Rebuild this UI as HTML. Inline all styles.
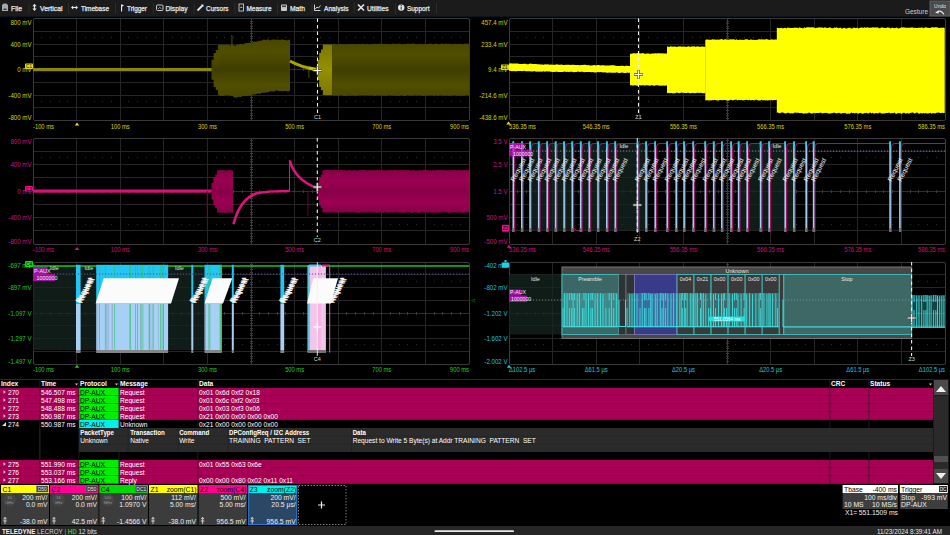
<!DOCTYPE html>
<html><head><meta charset="utf-8"><style>
html,body{margin:0;padding:0;background:#000;}
body{width:950px;height:535px;overflow:hidden;position:relative;}
svg{position:absolute;left:0;top:0;}
text{font-family:"Liberation Sans",sans-serif;}
</style></head><body>
<svg width="950" height="535" viewBox="0 0 950 535"><defs><linearGradient id="gY" x1="0" y1="0" x2="0" y2="1"><stop offset="0" stop-color="#4a4800"/><stop offset="0.22" stop-color="#504e00"/><stop offset="0.5" stop-color="#403e00"/><stop offset="0.78" stop-color="#504e00"/><stop offset="1" stop-color="#4a4800"/></linearGradient><linearGradient id="gYb" x1="0" y1="0" x2="0" y2="1"><stop offset="0" stop-color="#7c7800"/><stop offset="0.5" stop-color="#959000"/><stop offset="1" stop-color="#7c7800"/></linearGradient><linearGradient id="gM" x1="0" y1="0" x2="0" y2="1"><stop offset="0" stop-color="#850046"/><stop offset="0.25" stop-color="#9c0052"/><stop offset="0.5" stop-color="#880047"/><stop offset="0.75" stop-color="#9c0052"/><stop offset="1" stop-color="#850046"/></linearGradient><clipPath id="c1"><rect x="0" y="17" width="950" height="362"/></clipPath></defs>
<rect x="0" y="0" width="950" height="16" fill="#1b1b1b" />
<rect x="0" y="16" width="950" height="1" fill="#0c1420" />
<rect x="28.5" y="3" width="1" height="11" fill="#2c2c2c" />
<rect x="68" y="3" width="1" height="11" fill="#2c2c2c" />
<rect x="115" y="3" width="1" height="11" fill="#2c2c2c" />
<rect x="152.7" y="3" width="1" height="11" fill="#2c2c2c" />
<rect x="193.6" y="3" width="1" height="11" fill="#2c2c2c" />
<rect x="234.5" y="3" width="1" height="11" fill="#2c2c2c" />
<rect x="277" y="3" width="1" height="11" fill="#2c2c2c" />
<rect x="311.5" y="3" width="1" height="11" fill="#2c2c2c" />
<rect x="353.8" y="3" width="1" height="11" fill="#2c2c2c" />
<rect x="395" y="3" width="1" height="11" fill="#2c2c2c" />
<rect x="436" y="3" width="1" height="11" fill="#2c2c2c" />
<text x="11" y="10.5" font-size="7.4" fill="#ececec" text-anchor="start" textLength="11.00" lengthAdjust="spacingAndGlyphs"  stroke="#ececec" stroke-width="0.25">File</text>
<text x="40" y="10.5" font-size="7.4" fill="#ececec" text-anchor="start" textLength="22.50" lengthAdjust="spacingAndGlyphs"  stroke="#ececec" stroke-width="0.25">Vertical</text>
<text x="81" y="10.5" font-size="7.4" fill="#ececec" text-anchor="start" textLength="28.00" lengthAdjust="spacingAndGlyphs"  stroke="#ececec" stroke-width="0.25">Timebase</text>
<text x="127" y="10.5" font-size="7.4" fill="#ececec" text-anchor="start" textLength="20.00" lengthAdjust="spacingAndGlyphs"  stroke="#ececec" stroke-width="0.25">Trigger</text>
<text x="165.5" y="10.5" font-size="7.4" fill="#ececec" text-anchor="start" textLength="22.00" lengthAdjust="spacingAndGlyphs"  stroke="#ececec" stroke-width="0.25">Display</text>
<text x="206" y="10.5" font-size="7.4" fill="#ececec" text-anchor="start" textLength="22.50" lengthAdjust="spacingAndGlyphs"  stroke="#ececec" stroke-width="0.25">Cursors</text>
<text x="246.5" y="10.5" font-size="7.4" fill="#ececec" text-anchor="start" textLength="25.00" lengthAdjust="spacingAndGlyphs"  stroke="#ececec" stroke-width="0.25">Measure</text>
<text x="290" y="10.5" font-size="7.4" fill="#ececec" text-anchor="start" textLength="15.00" lengthAdjust="spacingAndGlyphs"  stroke="#ececec" stroke-width="0.25">Math</text>
<text x="324" y="10.5" font-size="7.4" fill="#ececec" text-anchor="start" textLength="24.50" lengthAdjust="spacingAndGlyphs"  stroke="#ececec" stroke-width="0.25">Analysis</text>
<text x="367" y="10.5" font-size="7.4" fill="#ececec" text-anchor="start" textLength="21.50" lengthAdjust="spacingAndGlyphs"  stroke="#ececec" stroke-width="0.25">Utilities</text>
<text x="407" y="10.5" font-size="7.4" fill="#ececec" text-anchor="start" textLength="22.50" lengthAdjust="spacingAndGlyphs"  stroke="#ececec" stroke-width="0.25">Support</text>
<path d="M2 5 L3.8 3.5 L6.2 3.5 L8 5 L8 11 L2 11 Z" fill="#a8a8a8"/><rect x="3.5" y="8.6" width="3" height="1.4" fill="#333"/>
<path d="M34.5 3.8 L36.6 6.2 L35.1 6.2 L35.1 8.6 L36.6 8.6 L34.5 11 L32.4 8.6 L33.9 8.6 L33.9 6.2 L32.4 6.2 Z" fill="#e8e8e8"/>
<path d="M71 7.5 L73.2 5.6 L73.2 7 L75.8 7 L75.8 5.6 L78 7.5 L75.8 9.4 L75.8 8 L73.2 8 L73.2 9.4 Z" fill="#e8e8e8"/>
<rect x="121" y="4.5" width="1.1" height="7" fill="#e8e8e8"/><path d="M122 4.5 L124 5.3 L122 6.8 Z" fill="#e8e8e8"/>
<rect x="156.5" y="5" width="6.5" height="5.5" rx="1" fill="none" stroke="#c8c8c8" stroke-width="1"/><path d="M158 9 L159.5 7.5 L161.5 8.5" stroke="#c8c8c8" stroke-width="0.7" fill="none"/>
<path d="M197.5 10.5 L202.5 5.5" stroke="#e8e8e8" stroke-width="1.8"/><path d="M201 4.5 L203.5 4.5 L203.5 7 Z" fill="#e8e8e8"/>
<rect x="239" y="4" width="4.5" height="7" fill="none" stroke="#c8c8c8" stroke-width="0.9"/><rect x="240.3" y="6.8" width="2" height="1" fill="#c8c8c8"/>
<rect x="281" y="4.5" width="6" height="6.5" rx="0.8" fill="#c8c8c8"/><rect x="282" y="5.5" width="4" height="1.6" fill="#444"/>
<path d="M314.5 4.5 L314.5 10.5 L320.5 10.5 M315.3 9 L317 7 L318.5 8 L320.5 5.5" stroke="#e8e8e8" stroke-width="0.9" fill="none"/>
<path d="M358 4.5 L364 10.5 M364 4.5 L358 10.5" stroke="#e8e8e8" stroke-width="1.6"/>
<circle cx="401.2" cy="7.6" r="3.2" fill="#e8e8e8"/><rect x="400.7" y="6.6" width="1" height="3" fill="#222"/><rect x="400.7" y="5" width="1" height="1" fill="#222"/>
<text x="928" y="13.5" font-size="6.5" fill="#d0d0d0" text-anchor="end"   >Gesture</text>
<rect x="930" y="1" width="20" height="15" fill="#4a4a4a" stroke="#606060" stroke-width="1"/>
<text x="940" y="8" font-size="5" fill="#e0e0e0" text-anchor="middle"   >Undo</text>
<path d="M937 12 Q941 9.5 944 14.5" stroke="#e8e8e8" stroke-width="1.2" fill="none"/><path d="M935 12.8 L938.5 10.5 L938.8 13.6 Z" fill="#e8e8e8"/>
<line x1="76.5" y1="18.5" x2="76.5" y2="120.7" stroke="#262626" stroke-width="1" />
<line x1="120.5" y1="18.5" x2="120.5" y2="120.7" stroke="#262626" stroke-width="1" />
<line x1="163.5" y1="18.5" x2="163.5" y2="120.7" stroke="#262626" stroke-width="1" />
<line x1="207.5" y1="18.5" x2="207.5" y2="120.7" stroke="#262626" stroke-width="1" />
<line x1="251.5" y1="18.5" x2="251.5" y2="120.7" stroke="#3c3c3c" stroke-width="1" />
<line x1="294.5" y1="18.5" x2="294.5" y2="120.7" stroke="#262626" stroke-width="1" />
<line x1="338.5" y1="18.5" x2="338.5" y2="120.7" stroke="#262626" stroke-width="1" />
<line x1="381.5" y1="18.5" x2="381.5" y2="120.7" stroke="#262626" stroke-width="1" />
<line x1="425.5" y1="18.5" x2="425.5" y2="120.7" stroke="#262626" stroke-width="1" />
<line x1="33" y1="31.5" x2="469" y2="31.5" stroke="#262626" stroke-width="1" />
<line x1="33" y1="44.5" x2="469" y2="44.5" stroke="#262626" stroke-width="1" />
<line x1="33" y1="56.5" x2="469" y2="56.5" stroke="#262626" stroke-width="1" />
<line x1="33" y1="69.5" x2="469" y2="69.5" stroke="#2e2e2e" stroke-width="1" />
<line x1="33" y1="82.5" x2="469" y2="82.5" stroke="#262626" stroke-width="1" />
<line x1="33" y1="95.5" x2="469" y2="95.5" stroke="#262626" stroke-width="1" />
<line x1="33" y1="107.5" x2="469" y2="107.5" stroke="#262626" stroke-width="1" />
<rect x="41" y="68.0" width="1" height="3" fill="#3a3a3a" />
<rect x="50" y="68.0" width="1" height="3" fill="#3a3a3a" />
<rect x="59" y="68.0" width="1" height="3" fill="#3a3a3a" />
<rect x="67" y="68.0" width="1" height="3" fill="#3a3a3a" />
<rect x="76" y="68.0" width="1" height="3" fill="#3a3a3a" />
<rect x="85" y="68.0" width="1" height="3" fill="#3a3a3a" />
<rect x="94" y="68.0" width="1" height="3" fill="#3a3a3a" />
<rect x="102" y="68.0" width="1" height="3" fill="#3a3a3a" />
<rect x="111" y="68.0" width="1" height="3" fill="#3a3a3a" />
<rect x="120" y="68.0" width="1" height="3" fill="#3a3a3a" />
<rect x="128" y="68.0" width="1" height="3" fill="#3a3a3a" />
<rect x="137" y="68.0" width="1" height="3" fill="#3a3a3a" />
<rect x="146" y="68.0" width="1" height="3" fill="#3a3a3a" />
<rect x="155" y="68.0" width="1" height="3" fill="#3a3a3a" />
<rect x="163" y="68.0" width="1" height="3" fill="#3a3a3a" />
<rect x="172" y="68.0" width="1" height="3" fill="#3a3a3a" />
<rect x="181" y="68.0" width="1" height="3" fill="#3a3a3a" />
<rect x="189" y="68.0" width="1" height="3" fill="#3a3a3a" />
<rect x="198" y="68.0" width="1" height="3" fill="#3a3a3a" />
<rect x="207" y="68.0" width="1" height="3" fill="#3a3a3a" />
<rect x="216" y="68.0" width="1" height="3" fill="#3a3a3a" />
<rect x="224" y="68.0" width="1" height="3" fill="#3a3a3a" />
<rect x="233" y="68.0" width="1" height="3" fill="#3a3a3a" />
<rect x="242" y="68.0" width="1" height="3" fill="#3a3a3a" />
<rect x="251" y="68.0" width="1" height="3" fill="#3a3a3a" />
<rect x="259" y="68.0" width="1" height="3" fill="#3a3a3a" />
<rect x="268" y="68.0" width="1" height="3" fill="#3a3a3a" />
<rect x="277" y="68.0" width="1" height="3" fill="#3a3a3a" />
<rect x="285" y="68.0" width="1" height="3" fill="#3a3a3a" />
<rect x="294" y="68.0" width="1" height="3" fill="#3a3a3a" />
<rect x="303" y="68.0" width="1" height="3" fill="#3a3a3a" />
<rect x="312" y="68.0" width="1" height="3" fill="#3a3a3a" />
<rect x="320" y="68.0" width="1" height="3" fill="#3a3a3a" />
<rect x="329" y="68.0" width="1" height="3" fill="#3a3a3a" />
<rect x="338" y="68.0" width="1" height="3" fill="#3a3a3a" />
<rect x="346" y="68.0" width="1" height="3" fill="#3a3a3a" />
<rect x="355" y="68.0" width="1" height="3" fill="#3a3a3a" />
<rect x="364" y="68.0" width="1" height="3" fill="#3a3a3a" />
<rect x="373" y="68.0" width="1" height="3" fill="#3a3a3a" />
<rect x="381" y="68.0" width="1" height="3" fill="#3a3a3a" />
<rect x="390" y="68.0" width="1" height="3" fill="#3a3a3a" />
<rect x="399" y="68.0" width="1" height="3" fill="#3a3a3a" />
<rect x="407" y="68.0" width="1" height="3" fill="#3a3a3a" />
<rect x="416" y="68.0" width="1" height="3" fill="#3a3a3a" />
<rect x="425" y="68.0" width="1" height="3" fill="#3a3a3a" />
<rect x="434" y="68.0" width="1" height="3" fill="#3a3a3a" />
<rect x="442" y="68.0" width="1" height="3" fill="#3a3a3a" />
<rect x="451" y="68.0" width="1" height="3" fill="#3a3a3a" />
<rect x="460" y="68.0" width="1" height="3" fill="#3a3a3a" />
<rect x="250.0" y="21" width="3" height="1" fill="#3a3a3a" />
<rect x="250.0" y="23" width="3" height="1" fill="#3a3a3a" />
<rect x="250.0" y="26" width="3" height="1" fill="#3a3a3a" />
<rect x="250.0" y="28" width="3" height="1" fill="#3a3a3a" />
<rect x="250.0" y="31" width="3" height="1" fill="#3a3a3a" />
<rect x="250.0" y="33" width="3" height="1" fill="#3a3a3a" />
<rect x="250.0" y="36" width="3" height="1" fill="#3a3a3a" />
<rect x="250.0" y="38" width="3" height="1" fill="#3a3a3a" />
<rect x="250.0" y="41" width="3" height="1" fill="#3a3a3a" />
<rect x="250.0" y="44" width="3" height="1" fill="#3a3a3a" />
<rect x="250.0" y="46" width="3" height="1" fill="#3a3a3a" />
<rect x="250.0" y="49" width="3" height="1" fill="#3a3a3a" />
<rect x="250.0" y="51" width="3" height="1" fill="#3a3a3a" />
<rect x="250.0" y="54" width="3" height="1" fill="#3a3a3a" />
<rect x="250.0" y="56" width="3" height="1" fill="#3a3a3a" />
<rect x="250.0" y="59" width="3" height="1" fill="#3a3a3a" />
<rect x="250.0" y="61" width="3" height="1" fill="#3a3a3a" />
<rect x="250.0" y="64" width="3" height="1" fill="#3a3a3a" />
<rect x="250.0" y="67" width="3" height="1" fill="#3a3a3a" />
<rect x="250.0" y="69" width="3" height="1" fill="#3a3a3a" />
<rect x="250.0" y="72" width="3" height="1" fill="#3a3a3a" />
<rect x="250.0" y="74" width="3" height="1" fill="#3a3a3a" />
<rect x="250.0" y="77" width="3" height="1" fill="#3a3a3a" />
<rect x="250.0" y="79" width="3" height="1" fill="#3a3a3a" />
<rect x="250.0" y="82" width="3" height="1" fill="#3a3a3a" />
<rect x="250.0" y="84" width="3" height="1" fill="#3a3a3a" />
<rect x="250.0" y="87" width="3" height="1" fill="#3a3a3a" />
<rect x="250.0" y="90" width="3" height="1" fill="#3a3a3a" />
<rect x="250.0" y="92" width="3" height="1" fill="#3a3a3a" />
<rect x="250.0" y="95" width="3" height="1" fill="#3a3a3a" />
<rect x="250.0" y="97" width="3" height="1" fill="#3a3a3a" />
<rect x="250.0" y="100" width="3" height="1" fill="#3a3a3a" />
<rect x="250.0" y="102" width="3" height="1" fill="#3a3a3a" />
<rect x="250.0" y="105" width="3" height="1" fill="#3a3a3a" />
<rect x="250.0" y="107" width="3" height="1" fill="#3a3a3a" />
<rect x="250.0" y="110" width="3" height="1" fill="#3a3a3a" />
<rect x="250.0" y="113" width="3" height="1" fill="#3a3a3a" />
<rect x="250.0" y="115" width="3" height="1" fill="#3a3a3a" />
<rect x="250.0" y="118" width="3" height="1" fill="#3a3a3a" />
<rect x="41" y="37" width="1" height="1" fill="#303030" />
<rect x="50" y="37" width="1" height="1" fill="#303030" />
<rect x="59" y="37" width="1" height="1" fill="#303030" />
<rect x="67" y="37" width="1" height="1" fill="#303030" />
<rect x="85" y="37" width="1" height="1" fill="#303030" />
<rect x="94" y="37" width="1" height="1" fill="#303030" />
<rect x="102" y="37" width="1" height="1" fill="#303030" />
<rect x="111" y="37" width="1" height="1" fill="#303030" />
<rect x="128" y="37" width="1" height="1" fill="#303030" />
<rect x="137" y="37" width="1" height="1" fill="#303030" />
<rect x="146" y="37" width="1" height="1" fill="#303030" />
<rect x="155" y="37" width="1" height="1" fill="#303030" />
<rect x="172" y="37" width="1" height="1" fill="#303030" />
<rect x="181" y="37" width="1" height="1" fill="#303030" />
<rect x="189" y="37" width="1" height="1" fill="#303030" />
<rect x="198" y="37" width="1" height="1" fill="#303030" />
<rect x="216" y="37" width="1" height="1" fill="#303030" />
<rect x="224" y="37" width="1" height="1" fill="#303030" />
<rect x="233" y="37" width="1" height="1" fill="#303030" />
<rect x="242" y="37" width="1" height="1" fill="#303030" />
<rect x="259" y="37" width="1" height="1" fill="#303030" />
<rect x="268" y="37" width="1" height="1" fill="#303030" />
<rect x="277" y="37" width="1" height="1" fill="#303030" />
<rect x="285" y="37" width="1" height="1" fill="#303030" />
<rect x="303" y="37" width="1" height="1" fill="#303030" />
<rect x="312" y="37" width="1" height="1" fill="#303030" />
<rect x="320" y="37" width="1" height="1" fill="#303030" />
<rect x="329" y="37" width="1" height="1" fill="#303030" />
<rect x="346" y="37" width="1" height="1" fill="#303030" />
<rect x="355" y="37" width="1" height="1" fill="#303030" />
<rect x="364" y="37" width="1" height="1" fill="#303030" />
<rect x="373" y="37" width="1" height="1" fill="#303030" />
<rect x="390" y="37" width="1" height="1" fill="#303030" />
<rect x="399" y="37" width="1" height="1" fill="#303030" />
<rect x="407" y="37" width="1" height="1" fill="#303030" />
<rect x="416" y="37" width="1" height="1" fill="#303030" />
<rect x="434" y="37" width="1" height="1" fill="#303030" />
<rect x="442" y="37" width="1" height="1" fill="#303030" />
<rect x="451" y="37" width="1" height="1" fill="#303030" />
<rect x="460" y="37" width="1" height="1" fill="#303030" />
<rect x="41" y="101" width="1" height="1" fill="#303030" />
<rect x="50" y="101" width="1" height="1" fill="#303030" />
<rect x="59" y="101" width="1" height="1" fill="#303030" />
<rect x="67" y="101" width="1" height="1" fill="#303030" />
<rect x="85" y="101" width="1" height="1" fill="#303030" />
<rect x="94" y="101" width="1" height="1" fill="#303030" />
<rect x="102" y="101" width="1" height="1" fill="#303030" />
<rect x="111" y="101" width="1" height="1" fill="#303030" />
<rect x="128" y="101" width="1" height="1" fill="#303030" />
<rect x="137" y="101" width="1" height="1" fill="#303030" />
<rect x="146" y="101" width="1" height="1" fill="#303030" />
<rect x="155" y="101" width="1" height="1" fill="#303030" />
<rect x="172" y="101" width="1" height="1" fill="#303030" />
<rect x="181" y="101" width="1" height="1" fill="#303030" />
<rect x="189" y="101" width="1" height="1" fill="#303030" />
<rect x="198" y="101" width="1" height="1" fill="#303030" />
<rect x="216" y="101" width="1" height="1" fill="#303030" />
<rect x="224" y="101" width="1" height="1" fill="#303030" />
<rect x="233" y="101" width="1" height="1" fill="#303030" />
<rect x="242" y="101" width="1" height="1" fill="#303030" />
<rect x="259" y="101" width="1" height="1" fill="#303030" />
<rect x="268" y="101" width="1" height="1" fill="#303030" />
<rect x="277" y="101" width="1" height="1" fill="#303030" />
<rect x="285" y="101" width="1" height="1" fill="#303030" />
<rect x="303" y="101" width="1" height="1" fill="#303030" />
<rect x="312" y="101" width="1" height="1" fill="#303030" />
<rect x="320" y="101" width="1" height="1" fill="#303030" />
<rect x="329" y="101" width="1" height="1" fill="#303030" />
<rect x="346" y="101" width="1" height="1" fill="#303030" />
<rect x="355" y="101" width="1" height="1" fill="#303030" />
<rect x="364" y="101" width="1" height="1" fill="#303030" />
<rect x="373" y="101" width="1" height="1" fill="#303030" />
<rect x="390" y="101" width="1" height="1" fill="#303030" />
<rect x="399" y="101" width="1" height="1" fill="#303030" />
<rect x="407" y="101" width="1" height="1" fill="#303030" />
<rect x="416" y="101" width="1" height="1" fill="#303030" />
<rect x="434" y="101" width="1" height="1" fill="#303030" />
<rect x="442" y="101" width="1" height="1" fill="#303030" />
<rect x="451" y="101" width="1" height="1" fill="#303030" />
<rect x="460" y="101" width="1" height="1" fill="#303030" />
<rect x="33.5" y="18.5" width="436.0" height="102.0" fill="none" stroke="#3a3a3a" stroke-width="1" rx="1.5"/>
<line x1="552.5" y1="18.5" x2="552.5" y2="120.7" stroke="#262626" stroke-width="1" />
<line x1="596.5" y1="18.5" x2="596.5" y2="120.7" stroke="#262626" stroke-width="1" />
<line x1="639.5" y1="18.5" x2="639.5" y2="120.7" stroke="#262626" stroke-width="1" />
<line x1="683.5" y1="18.5" x2="683.5" y2="120.7" stroke="#262626" stroke-width="1" />
<line x1="727.5" y1="18.5" x2="727.5" y2="120.7" stroke="#3c3c3c" stroke-width="1" />
<line x1="770.5" y1="18.5" x2="770.5" y2="120.7" stroke="#262626" stroke-width="1" />
<line x1="814.5" y1="18.5" x2="814.5" y2="120.7" stroke="#262626" stroke-width="1" />
<line x1="857.5" y1="18.5" x2="857.5" y2="120.7" stroke="#262626" stroke-width="1" />
<line x1="901.5" y1="18.5" x2="901.5" y2="120.7" stroke="#262626" stroke-width="1" />
<line x1="509" y1="31.5" x2="945" y2="31.5" stroke="#262626" stroke-width="1" />
<line x1="509" y1="44.5" x2="945" y2="44.5" stroke="#262626" stroke-width="1" />
<line x1="509" y1="56.5" x2="945" y2="56.5" stroke="#262626" stroke-width="1" />
<line x1="509" y1="69.5" x2="945" y2="69.5" stroke="#2e2e2e" stroke-width="1" />
<line x1="509" y1="82.5" x2="945" y2="82.5" stroke="#262626" stroke-width="1" />
<line x1="509" y1="95.5" x2="945" y2="95.5" stroke="#262626" stroke-width="1" />
<line x1="509" y1="107.5" x2="945" y2="107.5" stroke="#262626" stroke-width="1" />
<rect x="517" y="68.0" width="1" height="3" fill="#3a3a3a" />
<rect x="526" y="68.0" width="1" height="3" fill="#3a3a3a" />
<rect x="535" y="68.0" width="1" height="3" fill="#3a3a3a" />
<rect x="543" y="68.0" width="1" height="3" fill="#3a3a3a" />
<rect x="552" y="68.0" width="1" height="3" fill="#3a3a3a" />
<rect x="561" y="68.0" width="1" height="3" fill="#3a3a3a" />
<rect x="570" y="68.0" width="1" height="3" fill="#3a3a3a" />
<rect x="578" y="68.0" width="1" height="3" fill="#3a3a3a" />
<rect x="587" y="68.0" width="1" height="3" fill="#3a3a3a" />
<rect x="596" y="68.0" width="1" height="3" fill="#3a3a3a" />
<rect x="604" y="68.0" width="1" height="3" fill="#3a3a3a" />
<rect x="613" y="68.0" width="1" height="3" fill="#3a3a3a" />
<rect x="622" y="68.0" width="1" height="3" fill="#3a3a3a" />
<rect x="631" y="68.0" width="1" height="3" fill="#3a3a3a" />
<rect x="639" y="68.0" width="1" height="3" fill="#3a3a3a" />
<rect x="648" y="68.0" width="1" height="3" fill="#3a3a3a" />
<rect x="657" y="68.0" width="1" height="3" fill="#3a3a3a" />
<rect x="665" y="68.0" width="1" height="3" fill="#3a3a3a" />
<rect x="674" y="68.0" width="1" height="3" fill="#3a3a3a" />
<rect x="683" y="68.0" width="1" height="3" fill="#3a3a3a" />
<rect x="692" y="68.0" width="1" height="3" fill="#3a3a3a" />
<rect x="700" y="68.0" width="1" height="3" fill="#3a3a3a" />
<rect x="709" y="68.0" width="1" height="3" fill="#3a3a3a" />
<rect x="718" y="68.0" width="1" height="3" fill="#3a3a3a" />
<rect x="727" y="68.0" width="1" height="3" fill="#3a3a3a" />
<rect x="735" y="68.0" width="1" height="3" fill="#3a3a3a" />
<rect x="744" y="68.0" width="1" height="3" fill="#3a3a3a" />
<rect x="753" y="68.0" width="1" height="3" fill="#3a3a3a" />
<rect x="761" y="68.0" width="1" height="3" fill="#3a3a3a" />
<rect x="770" y="68.0" width="1" height="3" fill="#3a3a3a" />
<rect x="779" y="68.0" width="1" height="3" fill="#3a3a3a" />
<rect x="788" y="68.0" width="1" height="3" fill="#3a3a3a" />
<rect x="796" y="68.0" width="1" height="3" fill="#3a3a3a" />
<rect x="805" y="68.0" width="1" height="3" fill="#3a3a3a" />
<rect x="814" y="68.0" width="1" height="3" fill="#3a3a3a" />
<rect x="822" y="68.0" width="1" height="3" fill="#3a3a3a" />
<rect x="831" y="68.0" width="1" height="3" fill="#3a3a3a" />
<rect x="840" y="68.0" width="1" height="3" fill="#3a3a3a" />
<rect x="849" y="68.0" width="1" height="3" fill="#3a3a3a" />
<rect x="857" y="68.0" width="1" height="3" fill="#3a3a3a" />
<rect x="866" y="68.0" width="1" height="3" fill="#3a3a3a" />
<rect x="875" y="68.0" width="1" height="3" fill="#3a3a3a" />
<rect x="883" y="68.0" width="1" height="3" fill="#3a3a3a" />
<rect x="892" y="68.0" width="1" height="3" fill="#3a3a3a" />
<rect x="901" y="68.0" width="1" height="3" fill="#3a3a3a" />
<rect x="910" y="68.0" width="1" height="3" fill="#3a3a3a" />
<rect x="918" y="68.0" width="1" height="3" fill="#3a3a3a" />
<rect x="927" y="68.0" width="1" height="3" fill="#3a3a3a" />
<rect x="936" y="68.0" width="1" height="3" fill="#3a3a3a" />
<rect x="726.0" y="21" width="3" height="1" fill="#3a3a3a" />
<rect x="726.0" y="23" width="3" height="1" fill="#3a3a3a" />
<rect x="726.0" y="26" width="3" height="1" fill="#3a3a3a" />
<rect x="726.0" y="28" width="3" height="1" fill="#3a3a3a" />
<rect x="726.0" y="31" width="3" height="1" fill="#3a3a3a" />
<rect x="726.0" y="33" width="3" height="1" fill="#3a3a3a" />
<rect x="726.0" y="36" width="3" height="1" fill="#3a3a3a" />
<rect x="726.0" y="38" width="3" height="1" fill="#3a3a3a" />
<rect x="726.0" y="41" width="3" height="1" fill="#3a3a3a" />
<rect x="726.0" y="44" width="3" height="1" fill="#3a3a3a" />
<rect x="726.0" y="46" width="3" height="1" fill="#3a3a3a" />
<rect x="726.0" y="49" width="3" height="1" fill="#3a3a3a" />
<rect x="726.0" y="51" width="3" height="1" fill="#3a3a3a" />
<rect x="726.0" y="54" width="3" height="1" fill="#3a3a3a" />
<rect x="726.0" y="56" width="3" height="1" fill="#3a3a3a" />
<rect x="726.0" y="59" width="3" height="1" fill="#3a3a3a" />
<rect x="726.0" y="61" width="3" height="1" fill="#3a3a3a" />
<rect x="726.0" y="64" width="3" height="1" fill="#3a3a3a" />
<rect x="726.0" y="67" width="3" height="1" fill="#3a3a3a" />
<rect x="726.0" y="69" width="3" height="1" fill="#3a3a3a" />
<rect x="726.0" y="72" width="3" height="1" fill="#3a3a3a" />
<rect x="726.0" y="74" width="3" height="1" fill="#3a3a3a" />
<rect x="726.0" y="77" width="3" height="1" fill="#3a3a3a" />
<rect x="726.0" y="79" width="3" height="1" fill="#3a3a3a" />
<rect x="726.0" y="82" width="3" height="1" fill="#3a3a3a" />
<rect x="726.0" y="84" width="3" height="1" fill="#3a3a3a" />
<rect x="726.0" y="87" width="3" height="1" fill="#3a3a3a" />
<rect x="726.0" y="90" width="3" height="1" fill="#3a3a3a" />
<rect x="726.0" y="92" width="3" height="1" fill="#3a3a3a" />
<rect x="726.0" y="95" width="3" height="1" fill="#3a3a3a" />
<rect x="726.0" y="97" width="3" height="1" fill="#3a3a3a" />
<rect x="726.0" y="100" width="3" height="1" fill="#3a3a3a" />
<rect x="726.0" y="102" width="3" height="1" fill="#3a3a3a" />
<rect x="726.0" y="105" width="3" height="1" fill="#3a3a3a" />
<rect x="726.0" y="107" width="3" height="1" fill="#3a3a3a" />
<rect x="726.0" y="110" width="3" height="1" fill="#3a3a3a" />
<rect x="726.0" y="113" width="3" height="1" fill="#3a3a3a" />
<rect x="726.0" y="115" width="3" height="1" fill="#3a3a3a" />
<rect x="726.0" y="118" width="3" height="1" fill="#3a3a3a" />
<rect x="517" y="37" width="1" height="1" fill="#303030" />
<rect x="526" y="37" width="1" height="1" fill="#303030" />
<rect x="535" y="37" width="1" height="1" fill="#303030" />
<rect x="543" y="37" width="1" height="1" fill="#303030" />
<rect x="561" y="37" width="1" height="1" fill="#303030" />
<rect x="570" y="37" width="1" height="1" fill="#303030" />
<rect x="578" y="37" width="1" height="1" fill="#303030" />
<rect x="587" y="37" width="1" height="1" fill="#303030" />
<rect x="604" y="37" width="1" height="1" fill="#303030" />
<rect x="613" y="37" width="1" height="1" fill="#303030" />
<rect x="622" y="37" width="1" height="1" fill="#303030" />
<rect x="631" y="37" width="1" height="1" fill="#303030" />
<rect x="648" y="37" width="1" height="1" fill="#303030" />
<rect x="657" y="37" width="1" height="1" fill="#303030" />
<rect x="665" y="37" width="1" height="1" fill="#303030" />
<rect x="674" y="37" width="1" height="1" fill="#303030" />
<rect x="692" y="37" width="1" height="1" fill="#303030" />
<rect x="700" y="37" width="1" height="1" fill="#303030" />
<rect x="709" y="37" width="1" height="1" fill="#303030" />
<rect x="718" y="37" width="1" height="1" fill="#303030" />
<rect x="735" y="37" width="1" height="1" fill="#303030" />
<rect x="744" y="37" width="1" height="1" fill="#303030" />
<rect x="753" y="37" width="1" height="1" fill="#303030" />
<rect x="761" y="37" width="1" height="1" fill="#303030" />
<rect x="779" y="37" width="1" height="1" fill="#303030" />
<rect x="788" y="37" width="1" height="1" fill="#303030" />
<rect x="796" y="37" width="1" height="1" fill="#303030" />
<rect x="805" y="37" width="1" height="1" fill="#303030" />
<rect x="822" y="37" width="1" height="1" fill="#303030" />
<rect x="831" y="37" width="1" height="1" fill="#303030" />
<rect x="840" y="37" width="1" height="1" fill="#303030" />
<rect x="849" y="37" width="1" height="1" fill="#303030" />
<rect x="866" y="37" width="1" height="1" fill="#303030" />
<rect x="875" y="37" width="1" height="1" fill="#303030" />
<rect x="883" y="37" width="1" height="1" fill="#303030" />
<rect x="892" y="37" width="1" height="1" fill="#303030" />
<rect x="910" y="37" width="1" height="1" fill="#303030" />
<rect x="918" y="37" width="1" height="1" fill="#303030" />
<rect x="927" y="37" width="1" height="1" fill="#303030" />
<rect x="936" y="37" width="1" height="1" fill="#303030" />
<rect x="517" y="101" width="1" height="1" fill="#303030" />
<rect x="526" y="101" width="1" height="1" fill="#303030" />
<rect x="535" y="101" width="1" height="1" fill="#303030" />
<rect x="543" y="101" width="1" height="1" fill="#303030" />
<rect x="561" y="101" width="1" height="1" fill="#303030" />
<rect x="570" y="101" width="1" height="1" fill="#303030" />
<rect x="578" y="101" width="1" height="1" fill="#303030" />
<rect x="587" y="101" width="1" height="1" fill="#303030" />
<rect x="604" y="101" width="1" height="1" fill="#303030" />
<rect x="613" y="101" width="1" height="1" fill="#303030" />
<rect x="622" y="101" width="1" height="1" fill="#303030" />
<rect x="631" y="101" width="1" height="1" fill="#303030" />
<rect x="648" y="101" width="1" height="1" fill="#303030" />
<rect x="657" y="101" width="1" height="1" fill="#303030" />
<rect x="665" y="101" width="1" height="1" fill="#303030" />
<rect x="674" y="101" width="1" height="1" fill="#303030" />
<rect x="692" y="101" width="1" height="1" fill="#303030" />
<rect x="700" y="101" width="1" height="1" fill="#303030" />
<rect x="709" y="101" width="1" height="1" fill="#303030" />
<rect x="718" y="101" width="1" height="1" fill="#303030" />
<rect x="735" y="101" width="1" height="1" fill="#303030" />
<rect x="744" y="101" width="1" height="1" fill="#303030" />
<rect x="753" y="101" width="1" height="1" fill="#303030" />
<rect x="761" y="101" width="1" height="1" fill="#303030" />
<rect x="779" y="101" width="1" height="1" fill="#303030" />
<rect x="788" y="101" width="1" height="1" fill="#303030" />
<rect x="796" y="101" width="1" height="1" fill="#303030" />
<rect x="805" y="101" width="1" height="1" fill="#303030" />
<rect x="822" y="101" width="1" height="1" fill="#303030" />
<rect x="831" y="101" width="1" height="1" fill="#303030" />
<rect x="840" y="101" width="1" height="1" fill="#303030" />
<rect x="849" y="101" width="1" height="1" fill="#303030" />
<rect x="866" y="101" width="1" height="1" fill="#303030" />
<rect x="875" y="101" width="1" height="1" fill="#303030" />
<rect x="883" y="101" width="1" height="1" fill="#303030" />
<rect x="892" y="101" width="1" height="1" fill="#303030" />
<rect x="910" y="101" width="1" height="1" fill="#303030" />
<rect x="918" y="101" width="1" height="1" fill="#303030" />
<rect x="927" y="101" width="1" height="1" fill="#303030" />
<rect x="936" y="101" width="1" height="1" fill="#303030" />
<rect x="509.5" y="18.5" width="436.0" height="102.0" fill="none" stroke="#3a3a3a" stroke-width="1" rx="1.5"/>
<line x1="76.5" y1="138" x2="76.5" y2="244" stroke="#262626" stroke-width="1" />
<line x1="120.5" y1="138" x2="120.5" y2="244" stroke="#262626" stroke-width="1" />
<line x1="163.5" y1="138" x2="163.5" y2="244" stroke="#262626" stroke-width="1" />
<line x1="207.5" y1="138" x2="207.5" y2="244" stroke="#262626" stroke-width="1" />
<line x1="251.5" y1="138" x2="251.5" y2="244" stroke="#3c3c3c" stroke-width="1" />
<line x1="294.5" y1="138" x2="294.5" y2="244" stroke="#262626" stroke-width="1" />
<line x1="338.5" y1="138" x2="338.5" y2="244" stroke="#262626" stroke-width="1" />
<line x1="381.5" y1="138" x2="381.5" y2="244" stroke="#262626" stroke-width="1" />
<line x1="425.5" y1="138" x2="425.5" y2="244" stroke="#262626" stroke-width="1" />
<line x1="33" y1="151.5" x2="469" y2="151.5" stroke="#262626" stroke-width="1" />
<line x1="33" y1="164.5" x2="469" y2="164.5" stroke="#262626" stroke-width="1" />
<line x1="33" y1="177.5" x2="469" y2="177.5" stroke="#262626" stroke-width="1" />
<line x1="33" y1="191.5" x2="469" y2="191.5" stroke="#2e2e2e" stroke-width="1" />
<line x1="33" y1="204.5" x2="469" y2="204.5" stroke="#262626" stroke-width="1" />
<line x1="33" y1="217.5" x2="469" y2="217.5" stroke="#262626" stroke-width="1" />
<line x1="33" y1="230.5" x2="469" y2="230.5" stroke="#262626" stroke-width="1" />
<rect x="41" y="190.0" width="1" height="3" fill="#3a3a3a" />
<rect x="50" y="190.0" width="1" height="3" fill="#3a3a3a" />
<rect x="59" y="190.0" width="1" height="3" fill="#3a3a3a" />
<rect x="67" y="190.0" width="1" height="3" fill="#3a3a3a" />
<rect x="76" y="190.0" width="1" height="3" fill="#3a3a3a" />
<rect x="85" y="190.0" width="1" height="3" fill="#3a3a3a" />
<rect x="94" y="190.0" width="1" height="3" fill="#3a3a3a" />
<rect x="102" y="190.0" width="1" height="3" fill="#3a3a3a" />
<rect x="111" y="190.0" width="1" height="3" fill="#3a3a3a" />
<rect x="120" y="190.0" width="1" height="3" fill="#3a3a3a" />
<rect x="128" y="190.0" width="1" height="3" fill="#3a3a3a" />
<rect x="137" y="190.0" width="1" height="3" fill="#3a3a3a" />
<rect x="146" y="190.0" width="1" height="3" fill="#3a3a3a" />
<rect x="155" y="190.0" width="1" height="3" fill="#3a3a3a" />
<rect x="163" y="190.0" width="1" height="3" fill="#3a3a3a" />
<rect x="172" y="190.0" width="1" height="3" fill="#3a3a3a" />
<rect x="181" y="190.0" width="1" height="3" fill="#3a3a3a" />
<rect x="189" y="190.0" width="1" height="3" fill="#3a3a3a" />
<rect x="198" y="190.0" width="1" height="3" fill="#3a3a3a" />
<rect x="207" y="190.0" width="1" height="3" fill="#3a3a3a" />
<rect x="216" y="190.0" width="1" height="3" fill="#3a3a3a" />
<rect x="224" y="190.0" width="1" height="3" fill="#3a3a3a" />
<rect x="233" y="190.0" width="1" height="3" fill="#3a3a3a" />
<rect x="242" y="190.0" width="1" height="3" fill="#3a3a3a" />
<rect x="251" y="190.0" width="1" height="3" fill="#3a3a3a" />
<rect x="259" y="190.0" width="1" height="3" fill="#3a3a3a" />
<rect x="268" y="190.0" width="1" height="3" fill="#3a3a3a" />
<rect x="277" y="190.0" width="1" height="3" fill="#3a3a3a" />
<rect x="285" y="190.0" width="1" height="3" fill="#3a3a3a" />
<rect x="294" y="190.0" width="1" height="3" fill="#3a3a3a" />
<rect x="303" y="190.0" width="1" height="3" fill="#3a3a3a" />
<rect x="312" y="190.0" width="1" height="3" fill="#3a3a3a" />
<rect x="320" y="190.0" width="1" height="3" fill="#3a3a3a" />
<rect x="329" y="190.0" width="1" height="3" fill="#3a3a3a" />
<rect x="338" y="190.0" width="1" height="3" fill="#3a3a3a" />
<rect x="346" y="190.0" width="1" height="3" fill="#3a3a3a" />
<rect x="355" y="190.0" width="1" height="3" fill="#3a3a3a" />
<rect x="364" y="190.0" width="1" height="3" fill="#3a3a3a" />
<rect x="373" y="190.0" width="1" height="3" fill="#3a3a3a" />
<rect x="381" y="190.0" width="1" height="3" fill="#3a3a3a" />
<rect x="390" y="190.0" width="1" height="3" fill="#3a3a3a" />
<rect x="399" y="190.0" width="1" height="3" fill="#3a3a3a" />
<rect x="407" y="190.0" width="1" height="3" fill="#3a3a3a" />
<rect x="416" y="190.0" width="1" height="3" fill="#3a3a3a" />
<rect x="425" y="190.0" width="1" height="3" fill="#3a3a3a" />
<rect x="434" y="190.0" width="1" height="3" fill="#3a3a3a" />
<rect x="442" y="190.0" width="1" height="3" fill="#3a3a3a" />
<rect x="451" y="190.0" width="1" height="3" fill="#3a3a3a" />
<rect x="460" y="190.0" width="1" height="3" fill="#3a3a3a" />
<rect x="250.0" y="140" width="3" height="1" fill="#3a3a3a" />
<rect x="250.0" y="143" width="3" height="1" fill="#3a3a3a" />
<rect x="250.0" y="145" width="3" height="1" fill="#3a3a3a" />
<rect x="250.0" y="148" width="3" height="1" fill="#3a3a3a" />
<rect x="250.0" y="151" width="3" height="1" fill="#3a3a3a" />
<rect x="250.0" y="153" width="3" height="1" fill="#3a3a3a" />
<rect x="250.0" y="156" width="3" height="1" fill="#3a3a3a" />
<rect x="250.0" y="159" width="3" height="1" fill="#3a3a3a" />
<rect x="250.0" y="161" width="3" height="1" fill="#3a3a3a" />
<rect x="250.0" y="164" width="3" height="1" fill="#3a3a3a" />
<rect x="250.0" y="167" width="3" height="1" fill="#3a3a3a" />
<rect x="250.0" y="169" width="3" height="1" fill="#3a3a3a" />
<rect x="250.0" y="172" width="3" height="1" fill="#3a3a3a" />
<rect x="250.0" y="175" width="3" height="1" fill="#3a3a3a" />
<rect x="250.0" y="177" width="3" height="1" fill="#3a3a3a" />
<rect x="250.0" y="180" width="3" height="1" fill="#3a3a3a" />
<rect x="250.0" y="183" width="3" height="1" fill="#3a3a3a" />
<rect x="250.0" y="185" width="3" height="1" fill="#3a3a3a" />
<rect x="250.0" y="188" width="3" height="1" fill="#3a3a3a" />
<rect x="250.0" y="191" width="3" height="1" fill="#3a3a3a" />
<rect x="250.0" y="193" width="3" height="1" fill="#3a3a3a" />
<rect x="250.0" y="196" width="3" height="1" fill="#3a3a3a" />
<rect x="250.0" y="198" width="3" height="1" fill="#3a3a3a" />
<rect x="250.0" y="201" width="3" height="1" fill="#3a3a3a" />
<rect x="250.0" y="204" width="3" height="1" fill="#3a3a3a" />
<rect x="250.0" y="206" width="3" height="1" fill="#3a3a3a" />
<rect x="250.0" y="209" width="3" height="1" fill="#3a3a3a" />
<rect x="250.0" y="212" width="3" height="1" fill="#3a3a3a" />
<rect x="250.0" y="214" width="3" height="1" fill="#3a3a3a" />
<rect x="250.0" y="217" width="3" height="1" fill="#3a3a3a" />
<rect x="250.0" y="220" width="3" height="1" fill="#3a3a3a" />
<rect x="250.0" y="222" width="3" height="1" fill="#3a3a3a" />
<rect x="250.0" y="225" width="3" height="1" fill="#3a3a3a" />
<rect x="250.0" y="228" width="3" height="1" fill="#3a3a3a" />
<rect x="250.0" y="230" width="3" height="1" fill="#3a3a3a" />
<rect x="250.0" y="233" width="3" height="1" fill="#3a3a3a" />
<rect x="250.0" y="236" width="3" height="1" fill="#3a3a3a" />
<rect x="250.0" y="238" width="3" height="1" fill="#3a3a3a" />
<rect x="250.0" y="241" width="3" height="1" fill="#3a3a3a" />
<rect x="41" y="157" width="1" height="1" fill="#303030" />
<rect x="50" y="157" width="1" height="1" fill="#303030" />
<rect x="59" y="157" width="1" height="1" fill="#303030" />
<rect x="67" y="157" width="1" height="1" fill="#303030" />
<rect x="85" y="157" width="1" height="1" fill="#303030" />
<rect x="94" y="157" width="1" height="1" fill="#303030" />
<rect x="102" y="157" width="1" height="1" fill="#303030" />
<rect x="111" y="157" width="1" height="1" fill="#303030" />
<rect x="128" y="157" width="1" height="1" fill="#303030" />
<rect x="137" y="157" width="1" height="1" fill="#303030" />
<rect x="146" y="157" width="1" height="1" fill="#303030" />
<rect x="155" y="157" width="1" height="1" fill="#303030" />
<rect x="172" y="157" width="1" height="1" fill="#303030" />
<rect x="181" y="157" width="1" height="1" fill="#303030" />
<rect x="189" y="157" width="1" height="1" fill="#303030" />
<rect x="198" y="157" width="1" height="1" fill="#303030" />
<rect x="216" y="157" width="1" height="1" fill="#303030" />
<rect x="224" y="157" width="1" height="1" fill="#303030" />
<rect x="233" y="157" width="1" height="1" fill="#303030" />
<rect x="242" y="157" width="1" height="1" fill="#303030" />
<rect x="259" y="157" width="1" height="1" fill="#303030" />
<rect x="268" y="157" width="1" height="1" fill="#303030" />
<rect x="277" y="157" width="1" height="1" fill="#303030" />
<rect x="285" y="157" width="1" height="1" fill="#303030" />
<rect x="303" y="157" width="1" height="1" fill="#303030" />
<rect x="312" y="157" width="1" height="1" fill="#303030" />
<rect x="320" y="157" width="1" height="1" fill="#303030" />
<rect x="329" y="157" width="1" height="1" fill="#303030" />
<rect x="346" y="157" width="1" height="1" fill="#303030" />
<rect x="355" y="157" width="1" height="1" fill="#303030" />
<rect x="364" y="157" width="1" height="1" fill="#303030" />
<rect x="373" y="157" width="1" height="1" fill="#303030" />
<rect x="390" y="157" width="1" height="1" fill="#303030" />
<rect x="399" y="157" width="1" height="1" fill="#303030" />
<rect x="407" y="157" width="1" height="1" fill="#303030" />
<rect x="416" y="157" width="1" height="1" fill="#303030" />
<rect x="434" y="157" width="1" height="1" fill="#303030" />
<rect x="442" y="157" width="1" height="1" fill="#303030" />
<rect x="451" y="157" width="1" height="1" fill="#303030" />
<rect x="460" y="157" width="1" height="1" fill="#303030" />
<rect x="41" y="224" width="1" height="1" fill="#303030" />
<rect x="50" y="224" width="1" height="1" fill="#303030" />
<rect x="59" y="224" width="1" height="1" fill="#303030" />
<rect x="67" y="224" width="1" height="1" fill="#303030" />
<rect x="85" y="224" width="1" height="1" fill="#303030" />
<rect x="94" y="224" width="1" height="1" fill="#303030" />
<rect x="102" y="224" width="1" height="1" fill="#303030" />
<rect x="111" y="224" width="1" height="1" fill="#303030" />
<rect x="128" y="224" width="1" height="1" fill="#303030" />
<rect x="137" y="224" width="1" height="1" fill="#303030" />
<rect x="146" y="224" width="1" height="1" fill="#303030" />
<rect x="155" y="224" width="1" height="1" fill="#303030" />
<rect x="172" y="224" width="1" height="1" fill="#303030" />
<rect x="181" y="224" width="1" height="1" fill="#303030" />
<rect x="189" y="224" width="1" height="1" fill="#303030" />
<rect x="198" y="224" width="1" height="1" fill="#303030" />
<rect x="216" y="224" width="1" height="1" fill="#303030" />
<rect x="224" y="224" width="1" height="1" fill="#303030" />
<rect x="233" y="224" width="1" height="1" fill="#303030" />
<rect x="242" y="224" width="1" height="1" fill="#303030" />
<rect x="259" y="224" width="1" height="1" fill="#303030" />
<rect x="268" y="224" width="1" height="1" fill="#303030" />
<rect x="277" y="224" width="1" height="1" fill="#303030" />
<rect x="285" y="224" width="1" height="1" fill="#303030" />
<rect x="303" y="224" width="1" height="1" fill="#303030" />
<rect x="312" y="224" width="1" height="1" fill="#303030" />
<rect x="320" y="224" width="1" height="1" fill="#303030" />
<rect x="329" y="224" width="1" height="1" fill="#303030" />
<rect x="346" y="224" width="1" height="1" fill="#303030" />
<rect x="355" y="224" width="1" height="1" fill="#303030" />
<rect x="364" y="224" width="1" height="1" fill="#303030" />
<rect x="373" y="224" width="1" height="1" fill="#303030" />
<rect x="390" y="224" width="1" height="1" fill="#303030" />
<rect x="399" y="224" width="1" height="1" fill="#303030" />
<rect x="407" y="224" width="1" height="1" fill="#303030" />
<rect x="416" y="224" width="1" height="1" fill="#303030" />
<rect x="434" y="224" width="1" height="1" fill="#303030" />
<rect x="442" y="224" width="1" height="1" fill="#303030" />
<rect x="451" y="224" width="1" height="1" fill="#303030" />
<rect x="460" y="224" width="1" height="1" fill="#303030" />
<rect x="33.5" y="138.5" width="436.0" height="106.0" fill="none" stroke="#3a3a3a" stroke-width="1" rx="1.5"/>
<line x1="552.5" y1="138" x2="552.5" y2="244" stroke="#262626" stroke-width="1" />
<line x1="596.5" y1="138" x2="596.5" y2="244" stroke="#262626" stroke-width="1" />
<line x1="639.5" y1="138" x2="639.5" y2="244" stroke="#262626" stroke-width="1" />
<line x1="683.5" y1="138" x2="683.5" y2="244" stroke="#262626" stroke-width="1" />
<line x1="727.5" y1="138" x2="727.5" y2="244" stroke="#3c3c3c" stroke-width="1" />
<line x1="770.5" y1="138" x2="770.5" y2="244" stroke="#262626" stroke-width="1" />
<line x1="814.5" y1="138" x2="814.5" y2="244" stroke="#262626" stroke-width="1" />
<line x1="857.5" y1="138" x2="857.5" y2="244" stroke="#262626" stroke-width="1" />
<line x1="901.5" y1="138" x2="901.5" y2="244" stroke="#262626" stroke-width="1" />
<line x1="509" y1="151.5" x2="945" y2="151.5" stroke="#262626" stroke-width="1" />
<line x1="509" y1="164.5" x2="945" y2="164.5" stroke="#262626" stroke-width="1" />
<line x1="509" y1="177.5" x2="945" y2="177.5" stroke="#262626" stroke-width="1" />
<line x1="509" y1="191.5" x2="945" y2="191.5" stroke="#2e2e2e" stroke-width="1" />
<line x1="509" y1="204.5" x2="945" y2="204.5" stroke="#262626" stroke-width="1" />
<line x1="509" y1="217.5" x2="945" y2="217.5" stroke="#262626" stroke-width="1" />
<line x1="509" y1="230.5" x2="945" y2="230.5" stroke="#262626" stroke-width="1" />
<rect x="517" y="190.0" width="1" height="3" fill="#3a3a3a" />
<rect x="526" y="190.0" width="1" height="3" fill="#3a3a3a" />
<rect x="535" y="190.0" width="1" height="3" fill="#3a3a3a" />
<rect x="543" y="190.0" width="1" height="3" fill="#3a3a3a" />
<rect x="552" y="190.0" width="1" height="3" fill="#3a3a3a" />
<rect x="561" y="190.0" width="1" height="3" fill="#3a3a3a" />
<rect x="570" y="190.0" width="1" height="3" fill="#3a3a3a" />
<rect x="578" y="190.0" width="1" height="3" fill="#3a3a3a" />
<rect x="587" y="190.0" width="1" height="3" fill="#3a3a3a" />
<rect x="596" y="190.0" width="1" height="3" fill="#3a3a3a" />
<rect x="604" y="190.0" width="1" height="3" fill="#3a3a3a" />
<rect x="613" y="190.0" width="1" height="3" fill="#3a3a3a" />
<rect x="622" y="190.0" width="1" height="3" fill="#3a3a3a" />
<rect x="631" y="190.0" width="1" height="3" fill="#3a3a3a" />
<rect x="639" y="190.0" width="1" height="3" fill="#3a3a3a" />
<rect x="648" y="190.0" width="1" height="3" fill="#3a3a3a" />
<rect x="657" y="190.0" width="1" height="3" fill="#3a3a3a" />
<rect x="665" y="190.0" width="1" height="3" fill="#3a3a3a" />
<rect x="674" y="190.0" width="1" height="3" fill="#3a3a3a" />
<rect x="683" y="190.0" width="1" height="3" fill="#3a3a3a" />
<rect x="692" y="190.0" width="1" height="3" fill="#3a3a3a" />
<rect x="700" y="190.0" width="1" height="3" fill="#3a3a3a" />
<rect x="709" y="190.0" width="1" height="3" fill="#3a3a3a" />
<rect x="718" y="190.0" width="1" height="3" fill="#3a3a3a" />
<rect x="727" y="190.0" width="1" height="3" fill="#3a3a3a" />
<rect x="735" y="190.0" width="1" height="3" fill="#3a3a3a" />
<rect x="744" y="190.0" width="1" height="3" fill="#3a3a3a" />
<rect x="753" y="190.0" width="1" height="3" fill="#3a3a3a" />
<rect x="761" y="190.0" width="1" height="3" fill="#3a3a3a" />
<rect x="770" y="190.0" width="1" height="3" fill="#3a3a3a" />
<rect x="779" y="190.0" width="1" height="3" fill="#3a3a3a" />
<rect x="788" y="190.0" width="1" height="3" fill="#3a3a3a" />
<rect x="796" y="190.0" width="1" height="3" fill="#3a3a3a" />
<rect x="805" y="190.0" width="1" height="3" fill="#3a3a3a" />
<rect x="814" y="190.0" width="1" height="3" fill="#3a3a3a" />
<rect x="822" y="190.0" width="1" height="3" fill="#3a3a3a" />
<rect x="831" y="190.0" width="1" height="3" fill="#3a3a3a" />
<rect x="840" y="190.0" width="1" height="3" fill="#3a3a3a" />
<rect x="849" y="190.0" width="1" height="3" fill="#3a3a3a" />
<rect x="857" y="190.0" width="1" height="3" fill="#3a3a3a" />
<rect x="866" y="190.0" width="1" height="3" fill="#3a3a3a" />
<rect x="875" y="190.0" width="1" height="3" fill="#3a3a3a" />
<rect x="883" y="190.0" width="1" height="3" fill="#3a3a3a" />
<rect x="892" y="190.0" width="1" height="3" fill="#3a3a3a" />
<rect x="901" y="190.0" width="1" height="3" fill="#3a3a3a" />
<rect x="910" y="190.0" width="1" height="3" fill="#3a3a3a" />
<rect x="918" y="190.0" width="1" height="3" fill="#3a3a3a" />
<rect x="927" y="190.0" width="1" height="3" fill="#3a3a3a" />
<rect x="936" y="190.0" width="1" height="3" fill="#3a3a3a" />
<rect x="726.0" y="140" width="3" height="1" fill="#3a3a3a" />
<rect x="726.0" y="143" width="3" height="1" fill="#3a3a3a" />
<rect x="726.0" y="145" width="3" height="1" fill="#3a3a3a" />
<rect x="726.0" y="148" width="3" height="1" fill="#3a3a3a" />
<rect x="726.0" y="151" width="3" height="1" fill="#3a3a3a" />
<rect x="726.0" y="153" width="3" height="1" fill="#3a3a3a" />
<rect x="726.0" y="156" width="3" height="1" fill="#3a3a3a" />
<rect x="726.0" y="159" width="3" height="1" fill="#3a3a3a" />
<rect x="726.0" y="161" width="3" height="1" fill="#3a3a3a" />
<rect x="726.0" y="164" width="3" height="1" fill="#3a3a3a" />
<rect x="726.0" y="167" width="3" height="1" fill="#3a3a3a" />
<rect x="726.0" y="169" width="3" height="1" fill="#3a3a3a" />
<rect x="726.0" y="172" width="3" height="1" fill="#3a3a3a" />
<rect x="726.0" y="175" width="3" height="1" fill="#3a3a3a" />
<rect x="726.0" y="177" width="3" height="1" fill="#3a3a3a" />
<rect x="726.0" y="180" width="3" height="1" fill="#3a3a3a" />
<rect x="726.0" y="183" width="3" height="1" fill="#3a3a3a" />
<rect x="726.0" y="185" width="3" height="1" fill="#3a3a3a" />
<rect x="726.0" y="188" width="3" height="1" fill="#3a3a3a" />
<rect x="726.0" y="191" width="3" height="1" fill="#3a3a3a" />
<rect x="726.0" y="193" width="3" height="1" fill="#3a3a3a" />
<rect x="726.0" y="196" width="3" height="1" fill="#3a3a3a" />
<rect x="726.0" y="198" width="3" height="1" fill="#3a3a3a" />
<rect x="726.0" y="201" width="3" height="1" fill="#3a3a3a" />
<rect x="726.0" y="204" width="3" height="1" fill="#3a3a3a" />
<rect x="726.0" y="206" width="3" height="1" fill="#3a3a3a" />
<rect x="726.0" y="209" width="3" height="1" fill="#3a3a3a" />
<rect x="726.0" y="212" width="3" height="1" fill="#3a3a3a" />
<rect x="726.0" y="214" width="3" height="1" fill="#3a3a3a" />
<rect x="726.0" y="217" width="3" height="1" fill="#3a3a3a" />
<rect x="726.0" y="220" width="3" height="1" fill="#3a3a3a" />
<rect x="726.0" y="222" width="3" height="1" fill="#3a3a3a" />
<rect x="726.0" y="225" width="3" height="1" fill="#3a3a3a" />
<rect x="726.0" y="228" width="3" height="1" fill="#3a3a3a" />
<rect x="726.0" y="230" width="3" height="1" fill="#3a3a3a" />
<rect x="726.0" y="233" width="3" height="1" fill="#3a3a3a" />
<rect x="726.0" y="236" width="3" height="1" fill="#3a3a3a" />
<rect x="726.0" y="238" width="3" height="1" fill="#3a3a3a" />
<rect x="726.0" y="241" width="3" height="1" fill="#3a3a3a" />
<rect x="517" y="157" width="1" height="1" fill="#303030" />
<rect x="526" y="157" width="1" height="1" fill="#303030" />
<rect x="535" y="157" width="1" height="1" fill="#303030" />
<rect x="543" y="157" width="1" height="1" fill="#303030" />
<rect x="561" y="157" width="1" height="1" fill="#303030" />
<rect x="570" y="157" width="1" height="1" fill="#303030" />
<rect x="578" y="157" width="1" height="1" fill="#303030" />
<rect x="587" y="157" width="1" height="1" fill="#303030" />
<rect x="604" y="157" width="1" height="1" fill="#303030" />
<rect x="613" y="157" width="1" height="1" fill="#303030" />
<rect x="622" y="157" width="1" height="1" fill="#303030" />
<rect x="631" y="157" width="1" height="1" fill="#303030" />
<rect x="648" y="157" width="1" height="1" fill="#303030" />
<rect x="657" y="157" width="1" height="1" fill="#303030" />
<rect x="665" y="157" width="1" height="1" fill="#303030" />
<rect x="674" y="157" width="1" height="1" fill="#303030" />
<rect x="692" y="157" width="1" height="1" fill="#303030" />
<rect x="700" y="157" width="1" height="1" fill="#303030" />
<rect x="709" y="157" width="1" height="1" fill="#303030" />
<rect x="718" y="157" width="1" height="1" fill="#303030" />
<rect x="735" y="157" width="1" height="1" fill="#303030" />
<rect x="744" y="157" width="1" height="1" fill="#303030" />
<rect x="753" y="157" width="1" height="1" fill="#303030" />
<rect x="761" y="157" width="1" height="1" fill="#303030" />
<rect x="779" y="157" width="1" height="1" fill="#303030" />
<rect x="788" y="157" width="1" height="1" fill="#303030" />
<rect x="796" y="157" width="1" height="1" fill="#303030" />
<rect x="805" y="157" width="1" height="1" fill="#303030" />
<rect x="822" y="157" width="1" height="1" fill="#303030" />
<rect x="831" y="157" width="1" height="1" fill="#303030" />
<rect x="840" y="157" width="1" height="1" fill="#303030" />
<rect x="849" y="157" width="1" height="1" fill="#303030" />
<rect x="866" y="157" width="1" height="1" fill="#303030" />
<rect x="875" y="157" width="1" height="1" fill="#303030" />
<rect x="883" y="157" width="1" height="1" fill="#303030" />
<rect x="892" y="157" width="1" height="1" fill="#303030" />
<rect x="910" y="157" width="1" height="1" fill="#303030" />
<rect x="918" y="157" width="1" height="1" fill="#303030" />
<rect x="927" y="157" width="1" height="1" fill="#303030" />
<rect x="936" y="157" width="1" height="1" fill="#303030" />
<rect x="517" y="224" width="1" height="1" fill="#303030" />
<rect x="526" y="224" width="1" height="1" fill="#303030" />
<rect x="535" y="224" width="1" height="1" fill="#303030" />
<rect x="543" y="224" width="1" height="1" fill="#303030" />
<rect x="561" y="224" width="1" height="1" fill="#303030" />
<rect x="570" y="224" width="1" height="1" fill="#303030" />
<rect x="578" y="224" width="1" height="1" fill="#303030" />
<rect x="587" y="224" width="1" height="1" fill="#303030" />
<rect x="604" y="224" width="1" height="1" fill="#303030" />
<rect x="613" y="224" width="1" height="1" fill="#303030" />
<rect x="622" y="224" width="1" height="1" fill="#303030" />
<rect x="631" y="224" width="1" height="1" fill="#303030" />
<rect x="648" y="224" width="1" height="1" fill="#303030" />
<rect x="657" y="224" width="1" height="1" fill="#303030" />
<rect x="665" y="224" width="1" height="1" fill="#303030" />
<rect x="674" y="224" width="1" height="1" fill="#303030" />
<rect x="692" y="224" width="1" height="1" fill="#303030" />
<rect x="700" y="224" width="1" height="1" fill="#303030" />
<rect x="709" y="224" width="1" height="1" fill="#303030" />
<rect x="718" y="224" width="1" height="1" fill="#303030" />
<rect x="735" y="224" width="1" height="1" fill="#303030" />
<rect x="744" y="224" width="1" height="1" fill="#303030" />
<rect x="753" y="224" width="1" height="1" fill="#303030" />
<rect x="761" y="224" width="1" height="1" fill="#303030" />
<rect x="779" y="224" width="1" height="1" fill="#303030" />
<rect x="788" y="224" width="1" height="1" fill="#303030" />
<rect x="796" y="224" width="1" height="1" fill="#303030" />
<rect x="805" y="224" width="1" height="1" fill="#303030" />
<rect x="822" y="224" width="1" height="1" fill="#303030" />
<rect x="831" y="224" width="1" height="1" fill="#303030" />
<rect x="840" y="224" width="1" height="1" fill="#303030" />
<rect x="849" y="224" width="1" height="1" fill="#303030" />
<rect x="866" y="224" width="1" height="1" fill="#303030" />
<rect x="875" y="224" width="1" height="1" fill="#303030" />
<rect x="883" y="224" width="1" height="1" fill="#303030" />
<rect x="892" y="224" width="1" height="1" fill="#303030" />
<rect x="910" y="224" width="1" height="1" fill="#303030" />
<rect x="918" y="224" width="1" height="1" fill="#303030" />
<rect x="927" y="224" width="1" height="1" fill="#303030" />
<rect x="936" y="224" width="1" height="1" fill="#303030" />
<rect x="509.5" y="138.5" width="436.0" height="106.0" fill="none" stroke="#3a3a3a" stroke-width="1" rx="1.5"/>
<line x1="76.5" y1="262" x2="76.5" y2="364" stroke="#262626" stroke-width="1" />
<line x1="120.5" y1="262" x2="120.5" y2="364" stroke="#262626" stroke-width="1" />
<line x1="163.5" y1="262" x2="163.5" y2="364" stroke="#262626" stroke-width="1" />
<line x1="207.5" y1="262" x2="207.5" y2="364" stroke="#262626" stroke-width="1" />
<line x1="251.5" y1="262" x2="251.5" y2="364" stroke="#3c3c3c" stroke-width="1" />
<line x1="294.5" y1="262" x2="294.5" y2="364" stroke="#262626" stroke-width="1" />
<line x1="338.5" y1="262" x2="338.5" y2="364" stroke="#262626" stroke-width="1" />
<line x1="381.5" y1="262" x2="381.5" y2="364" stroke="#262626" stroke-width="1" />
<line x1="425.5" y1="262" x2="425.5" y2="364" stroke="#262626" stroke-width="1" />
<line x1="33" y1="274.5" x2="469" y2="274.5" stroke="#262626" stroke-width="1" />
<line x1="33" y1="287.5" x2="469" y2="287.5" stroke="#262626" stroke-width="1" />
<line x1="33" y1="300.5" x2="469" y2="300.5" stroke="#262626" stroke-width="1" />
<line x1="33" y1="313.5" x2="469" y2="313.5" stroke="#2e2e2e" stroke-width="1" />
<line x1="33" y1="325.5" x2="469" y2="325.5" stroke="#262626" stroke-width="1" />
<line x1="33" y1="338.5" x2="469" y2="338.5" stroke="#262626" stroke-width="1" />
<line x1="33" y1="351.5" x2="469" y2="351.5" stroke="#262626" stroke-width="1" />
<rect x="41" y="312.0" width="1" height="3" fill="#3a3a3a" />
<rect x="50" y="312.0" width="1" height="3" fill="#3a3a3a" />
<rect x="59" y="312.0" width="1" height="3" fill="#3a3a3a" />
<rect x="67" y="312.0" width="1" height="3" fill="#3a3a3a" />
<rect x="76" y="312.0" width="1" height="3" fill="#3a3a3a" />
<rect x="85" y="312.0" width="1" height="3" fill="#3a3a3a" />
<rect x="94" y="312.0" width="1" height="3" fill="#3a3a3a" />
<rect x="102" y="312.0" width="1" height="3" fill="#3a3a3a" />
<rect x="111" y="312.0" width="1" height="3" fill="#3a3a3a" />
<rect x="120" y="312.0" width="1" height="3" fill="#3a3a3a" />
<rect x="128" y="312.0" width="1" height="3" fill="#3a3a3a" />
<rect x="137" y="312.0" width="1" height="3" fill="#3a3a3a" />
<rect x="146" y="312.0" width="1" height="3" fill="#3a3a3a" />
<rect x="155" y="312.0" width="1" height="3" fill="#3a3a3a" />
<rect x="163" y="312.0" width="1" height="3" fill="#3a3a3a" />
<rect x="172" y="312.0" width="1" height="3" fill="#3a3a3a" />
<rect x="181" y="312.0" width="1" height="3" fill="#3a3a3a" />
<rect x="189" y="312.0" width="1" height="3" fill="#3a3a3a" />
<rect x="198" y="312.0" width="1" height="3" fill="#3a3a3a" />
<rect x="207" y="312.0" width="1" height="3" fill="#3a3a3a" />
<rect x="216" y="312.0" width="1" height="3" fill="#3a3a3a" />
<rect x="224" y="312.0" width="1" height="3" fill="#3a3a3a" />
<rect x="233" y="312.0" width="1" height="3" fill="#3a3a3a" />
<rect x="242" y="312.0" width="1" height="3" fill="#3a3a3a" />
<rect x="251" y="312.0" width="1" height="3" fill="#3a3a3a" />
<rect x="259" y="312.0" width="1" height="3" fill="#3a3a3a" />
<rect x="268" y="312.0" width="1" height="3" fill="#3a3a3a" />
<rect x="277" y="312.0" width="1" height="3" fill="#3a3a3a" />
<rect x="285" y="312.0" width="1" height="3" fill="#3a3a3a" />
<rect x="294" y="312.0" width="1" height="3" fill="#3a3a3a" />
<rect x="303" y="312.0" width="1" height="3" fill="#3a3a3a" />
<rect x="312" y="312.0" width="1" height="3" fill="#3a3a3a" />
<rect x="320" y="312.0" width="1" height="3" fill="#3a3a3a" />
<rect x="329" y="312.0" width="1" height="3" fill="#3a3a3a" />
<rect x="338" y="312.0" width="1" height="3" fill="#3a3a3a" />
<rect x="346" y="312.0" width="1" height="3" fill="#3a3a3a" />
<rect x="355" y="312.0" width="1" height="3" fill="#3a3a3a" />
<rect x="364" y="312.0" width="1" height="3" fill="#3a3a3a" />
<rect x="373" y="312.0" width="1" height="3" fill="#3a3a3a" />
<rect x="381" y="312.0" width="1" height="3" fill="#3a3a3a" />
<rect x="390" y="312.0" width="1" height="3" fill="#3a3a3a" />
<rect x="399" y="312.0" width="1" height="3" fill="#3a3a3a" />
<rect x="407" y="312.0" width="1" height="3" fill="#3a3a3a" />
<rect x="416" y="312.0" width="1" height="3" fill="#3a3a3a" />
<rect x="425" y="312.0" width="1" height="3" fill="#3a3a3a" />
<rect x="434" y="312.0" width="1" height="3" fill="#3a3a3a" />
<rect x="442" y="312.0" width="1" height="3" fill="#3a3a3a" />
<rect x="451" y="312.0" width="1" height="3" fill="#3a3a3a" />
<rect x="460" y="312.0" width="1" height="3" fill="#3a3a3a" />
<rect x="250.0" y="264" width="3" height="1" fill="#3a3a3a" />
<rect x="250.0" y="267" width="3" height="1" fill="#3a3a3a" />
<rect x="250.0" y="269" width="3" height="1" fill="#3a3a3a" />
<rect x="250.0" y="272" width="3" height="1" fill="#3a3a3a" />
<rect x="250.0" y="274" width="3" height="1" fill="#3a3a3a" />
<rect x="250.0" y="277" width="3" height="1" fill="#3a3a3a" />
<rect x="250.0" y="279" width="3" height="1" fill="#3a3a3a" />
<rect x="250.0" y="282" width="3" height="1" fill="#3a3a3a" />
<rect x="250.0" y="284" width="3" height="1" fill="#3a3a3a" />
<rect x="250.0" y="287" width="3" height="1" fill="#3a3a3a" />
<rect x="250.0" y="290" width="3" height="1" fill="#3a3a3a" />
<rect x="250.0" y="292" width="3" height="1" fill="#3a3a3a" />
<rect x="250.0" y="295" width="3" height="1" fill="#3a3a3a" />
<rect x="250.0" y="297" width="3" height="1" fill="#3a3a3a" />
<rect x="250.0" y="300" width="3" height="1" fill="#3a3a3a" />
<rect x="250.0" y="302" width="3" height="1" fill="#3a3a3a" />
<rect x="250.0" y="305" width="3" height="1" fill="#3a3a3a" />
<rect x="250.0" y="307" width="3" height="1" fill="#3a3a3a" />
<rect x="250.0" y="310" width="3" height="1" fill="#3a3a3a" />
<rect x="250.0" y="313" width="3" height="1" fill="#3a3a3a" />
<rect x="250.0" y="315" width="3" height="1" fill="#3a3a3a" />
<rect x="250.0" y="318" width="3" height="1" fill="#3a3a3a" />
<rect x="250.0" y="320" width="3" height="1" fill="#3a3a3a" />
<rect x="250.0" y="323" width="3" height="1" fill="#3a3a3a" />
<rect x="250.0" y="325" width="3" height="1" fill="#3a3a3a" />
<rect x="250.0" y="328" width="3" height="1" fill="#3a3a3a" />
<rect x="250.0" y="330" width="3" height="1" fill="#3a3a3a" />
<rect x="250.0" y="333" width="3" height="1" fill="#3a3a3a" />
<rect x="250.0" y="335" width="3" height="1" fill="#3a3a3a" />
<rect x="250.0" y="338" width="3" height="1" fill="#3a3a3a" />
<rect x="250.0" y="341" width="3" height="1" fill="#3a3a3a" />
<rect x="250.0" y="343" width="3" height="1" fill="#3a3a3a" />
<rect x="250.0" y="346" width="3" height="1" fill="#3a3a3a" />
<rect x="250.0" y="348" width="3" height="1" fill="#3a3a3a" />
<rect x="250.0" y="351" width="3" height="1" fill="#3a3a3a" />
<rect x="250.0" y="353" width="3" height="1" fill="#3a3a3a" />
<rect x="250.0" y="356" width="3" height="1" fill="#3a3a3a" />
<rect x="250.0" y="358" width="3" height="1" fill="#3a3a3a" />
<rect x="250.0" y="361" width="3" height="1" fill="#3a3a3a" />
<rect x="41" y="281" width="1" height="1" fill="#303030" />
<rect x="50" y="281" width="1" height="1" fill="#303030" />
<rect x="59" y="281" width="1" height="1" fill="#303030" />
<rect x="67" y="281" width="1" height="1" fill="#303030" />
<rect x="85" y="281" width="1" height="1" fill="#303030" />
<rect x="94" y="281" width="1" height="1" fill="#303030" />
<rect x="102" y="281" width="1" height="1" fill="#303030" />
<rect x="111" y="281" width="1" height="1" fill="#303030" />
<rect x="128" y="281" width="1" height="1" fill="#303030" />
<rect x="137" y="281" width="1" height="1" fill="#303030" />
<rect x="146" y="281" width="1" height="1" fill="#303030" />
<rect x="155" y="281" width="1" height="1" fill="#303030" />
<rect x="172" y="281" width="1" height="1" fill="#303030" />
<rect x="181" y="281" width="1" height="1" fill="#303030" />
<rect x="189" y="281" width="1" height="1" fill="#303030" />
<rect x="198" y="281" width="1" height="1" fill="#303030" />
<rect x="216" y="281" width="1" height="1" fill="#303030" />
<rect x="224" y="281" width="1" height="1" fill="#303030" />
<rect x="233" y="281" width="1" height="1" fill="#303030" />
<rect x="242" y="281" width="1" height="1" fill="#303030" />
<rect x="259" y="281" width="1" height="1" fill="#303030" />
<rect x="268" y="281" width="1" height="1" fill="#303030" />
<rect x="277" y="281" width="1" height="1" fill="#303030" />
<rect x="285" y="281" width="1" height="1" fill="#303030" />
<rect x="303" y="281" width="1" height="1" fill="#303030" />
<rect x="312" y="281" width="1" height="1" fill="#303030" />
<rect x="320" y="281" width="1" height="1" fill="#303030" />
<rect x="329" y="281" width="1" height="1" fill="#303030" />
<rect x="346" y="281" width="1" height="1" fill="#303030" />
<rect x="355" y="281" width="1" height="1" fill="#303030" />
<rect x="364" y="281" width="1" height="1" fill="#303030" />
<rect x="373" y="281" width="1" height="1" fill="#303030" />
<rect x="390" y="281" width="1" height="1" fill="#303030" />
<rect x="399" y="281" width="1" height="1" fill="#303030" />
<rect x="407" y="281" width="1" height="1" fill="#303030" />
<rect x="416" y="281" width="1" height="1" fill="#303030" />
<rect x="434" y="281" width="1" height="1" fill="#303030" />
<rect x="442" y="281" width="1" height="1" fill="#303030" />
<rect x="451" y="281" width="1" height="1" fill="#303030" />
<rect x="460" y="281" width="1" height="1" fill="#303030" />
<rect x="41" y="344" width="1" height="1" fill="#303030" />
<rect x="50" y="344" width="1" height="1" fill="#303030" />
<rect x="59" y="344" width="1" height="1" fill="#303030" />
<rect x="67" y="344" width="1" height="1" fill="#303030" />
<rect x="85" y="344" width="1" height="1" fill="#303030" />
<rect x="94" y="344" width="1" height="1" fill="#303030" />
<rect x="102" y="344" width="1" height="1" fill="#303030" />
<rect x="111" y="344" width="1" height="1" fill="#303030" />
<rect x="128" y="344" width="1" height="1" fill="#303030" />
<rect x="137" y="344" width="1" height="1" fill="#303030" />
<rect x="146" y="344" width="1" height="1" fill="#303030" />
<rect x="155" y="344" width="1" height="1" fill="#303030" />
<rect x="172" y="344" width="1" height="1" fill="#303030" />
<rect x="181" y="344" width="1" height="1" fill="#303030" />
<rect x="189" y="344" width="1" height="1" fill="#303030" />
<rect x="198" y="344" width="1" height="1" fill="#303030" />
<rect x="216" y="344" width="1" height="1" fill="#303030" />
<rect x="224" y="344" width="1" height="1" fill="#303030" />
<rect x="233" y="344" width="1" height="1" fill="#303030" />
<rect x="242" y="344" width="1" height="1" fill="#303030" />
<rect x="259" y="344" width="1" height="1" fill="#303030" />
<rect x="268" y="344" width="1" height="1" fill="#303030" />
<rect x="277" y="344" width="1" height="1" fill="#303030" />
<rect x="285" y="344" width="1" height="1" fill="#303030" />
<rect x="303" y="344" width="1" height="1" fill="#303030" />
<rect x="312" y="344" width="1" height="1" fill="#303030" />
<rect x="320" y="344" width="1" height="1" fill="#303030" />
<rect x="329" y="344" width="1" height="1" fill="#303030" />
<rect x="346" y="344" width="1" height="1" fill="#303030" />
<rect x="355" y="344" width="1" height="1" fill="#303030" />
<rect x="364" y="344" width="1" height="1" fill="#303030" />
<rect x="373" y="344" width="1" height="1" fill="#303030" />
<rect x="390" y="344" width="1" height="1" fill="#303030" />
<rect x="399" y="344" width="1" height="1" fill="#303030" />
<rect x="407" y="344" width="1" height="1" fill="#303030" />
<rect x="416" y="344" width="1" height="1" fill="#303030" />
<rect x="434" y="344" width="1" height="1" fill="#303030" />
<rect x="442" y="344" width="1" height="1" fill="#303030" />
<rect x="451" y="344" width="1" height="1" fill="#303030" />
<rect x="460" y="344" width="1" height="1" fill="#303030" />
<rect x="33.5" y="262.5" width="436.0" height="102.0" fill="none" stroke="#3a3a3a" stroke-width="1" rx="1.5"/>
<line x1="552.5" y1="262" x2="552.5" y2="364" stroke="#262626" stroke-width="1" />
<line x1="596.5" y1="262" x2="596.5" y2="364" stroke="#262626" stroke-width="1" />
<line x1="639.5" y1="262" x2="639.5" y2="364" stroke="#262626" stroke-width="1" />
<line x1="683.5" y1="262" x2="683.5" y2="364" stroke="#262626" stroke-width="1" />
<line x1="727.5" y1="262" x2="727.5" y2="364" stroke="#3c3c3c" stroke-width="1" />
<line x1="770.5" y1="262" x2="770.5" y2="364" stroke="#262626" stroke-width="1" />
<line x1="814.5" y1="262" x2="814.5" y2="364" stroke="#262626" stroke-width="1" />
<line x1="857.5" y1="262" x2="857.5" y2="364" stroke="#262626" stroke-width="1" />
<line x1="901.5" y1="262" x2="901.5" y2="364" stroke="#262626" stroke-width="1" />
<line x1="509" y1="274.5" x2="945" y2="274.5" stroke="#262626" stroke-width="1" />
<line x1="509" y1="287.5" x2="945" y2="287.5" stroke="#262626" stroke-width="1" />
<line x1="509" y1="300.5" x2="945" y2="300.5" stroke="#262626" stroke-width="1" />
<line x1="509" y1="313.5" x2="945" y2="313.5" stroke="#2e2e2e" stroke-width="1" />
<line x1="509" y1="325.5" x2="945" y2="325.5" stroke="#262626" stroke-width="1" />
<line x1="509" y1="338.5" x2="945" y2="338.5" stroke="#262626" stroke-width="1" />
<line x1="509" y1="351.5" x2="945" y2="351.5" stroke="#262626" stroke-width="1" />
<rect x="517" y="312.0" width="1" height="3" fill="#3a3a3a" />
<rect x="526" y="312.0" width="1" height="3" fill="#3a3a3a" />
<rect x="535" y="312.0" width="1" height="3" fill="#3a3a3a" />
<rect x="543" y="312.0" width="1" height="3" fill="#3a3a3a" />
<rect x="552" y="312.0" width="1" height="3" fill="#3a3a3a" />
<rect x="561" y="312.0" width="1" height="3" fill="#3a3a3a" />
<rect x="570" y="312.0" width="1" height="3" fill="#3a3a3a" />
<rect x="578" y="312.0" width="1" height="3" fill="#3a3a3a" />
<rect x="587" y="312.0" width="1" height="3" fill="#3a3a3a" />
<rect x="596" y="312.0" width="1" height="3" fill="#3a3a3a" />
<rect x="604" y="312.0" width="1" height="3" fill="#3a3a3a" />
<rect x="613" y="312.0" width="1" height="3" fill="#3a3a3a" />
<rect x="622" y="312.0" width="1" height="3" fill="#3a3a3a" />
<rect x="631" y="312.0" width="1" height="3" fill="#3a3a3a" />
<rect x="639" y="312.0" width="1" height="3" fill="#3a3a3a" />
<rect x="648" y="312.0" width="1" height="3" fill="#3a3a3a" />
<rect x="657" y="312.0" width="1" height="3" fill="#3a3a3a" />
<rect x="665" y="312.0" width="1" height="3" fill="#3a3a3a" />
<rect x="674" y="312.0" width="1" height="3" fill="#3a3a3a" />
<rect x="683" y="312.0" width="1" height="3" fill="#3a3a3a" />
<rect x="692" y="312.0" width="1" height="3" fill="#3a3a3a" />
<rect x="700" y="312.0" width="1" height="3" fill="#3a3a3a" />
<rect x="709" y="312.0" width="1" height="3" fill="#3a3a3a" />
<rect x="718" y="312.0" width="1" height="3" fill="#3a3a3a" />
<rect x="727" y="312.0" width="1" height="3" fill="#3a3a3a" />
<rect x="735" y="312.0" width="1" height="3" fill="#3a3a3a" />
<rect x="744" y="312.0" width="1" height="3" fill="#3a3a3a" />
<rect x="753" y="312.0" width="1" height="3" fill="#3a3a3a" />
<rect x="761" y="312.0" width="1" height="3" fill="#3a3a3a" />
<rect x="770" y="312.0" width="1" height="3" fill="#3a3a3a" />
<rect x="779" y="312.0" width="1" height="3" fill="#3a3a3a" />
<rect x="788" y="312.0" width="1" height="3" fill="#3a3a3a" />
<rect x="796" y="312.0" width="1" height="3" fill="#3a3a3a" />
<rect x="805" y="312.0" width="1" height="3" fill="#3a3a3a" />
<rect x="814" y="312.0" width="1" height="3" fill="#3a3a3a" />
<rect x="822" y="312.0" width="1" height="3" fill="#3a3a3a" />
<rect x="831" y="312.0" width="1" height="3" fill="#3a3a3a" />
<rect x="840" y="312.0" width="1" height="3" fill="#3a3a3a" />
<rect x="849" y="312.0" width="1" height="3" fill="#3a3a3a" />
<rect x="857" y="312.0" width="1" height="3" fill="#3a3a3a" />
<rect x="866" y="312.0" width="1" height="3" fill="#3a3a3a" />
<rect x="875" y="312.0" width="1" height="3" fill="#3a3a3a" />
<rect x="883" y="312.0" width="1" height="3" fill="#3a3a3a" />
<rect x="892" y="312.0" width="1" height="3" fill="#3a3a3a" />
<rect x="901" y="312.0" width="1" height="3" fill="#3a3a3a" />
<rect x="910" y="312.0" width="1" height="3" fill="#3a3a3a" />
<rect x="918" y="312.0" width="1" height="3" fill="#3a3a3a" />
<rect x="927" y="312.0" width="1" height="3" fill="#3a3a3a" />
<rect x="936" y="312.0" width="1" height="3" fill="#3a3a3a" />
<rect x="726.0" y="264" width="3" height="1" fill="#3a3a3a" />
<rect x="726.0" y="267" width="3" height="1" fill="#3a3a3a" />
<rect x="726.0" y="269" width="3" height="1" fill="#3a3a3a" />
<rect x="726.0" y="272" width="3" height="1" fill="#3a3a3a" />
<rect x="726.0" y="274" width="3" height="1" fill="#3a3a3a" />
<rect x="726.0" y="277" width="3" height="1" fill="#3a3a3a" />
<rect x="726.0" y="279" width="3" height="1" fill="#3a3a3a" />
<rect x="726.0" y="282" width="3" height="1" fill="#3a3a3a" />
<rect x="726.0" y="284" width="3" height="1" fill="#3a3a3a" />
<rect x="726.0" y="287" width="3" height="1" fill="#3a3a3a" />
<rect x="726.0" y="290" width="3" height="1" fill="#3a3a3a" />
<rect x="726.0" y="292" width="3" height="1" fill="#3a3a3a" />
<rect x="726.0" y="295" width="3" height="1" fill="#3a3a3a" />
<rect x="726.0" y="297" width="3" height="1" fill="#3a3a3a" />
<rect x="726.0" y="300" width="3" height="1" fill="#3a3a3a" />
<rect x="726.0" y="302" width="3" height="1" fill="#3a3a3a" />
<rect x="726.0" y="305" width="3" height="1" fill="#3a3a3a" />
<rect x="726.0" y="307" width="3" height="1" fill="#3a3a3a" />
<rect x="726.0" y="310" width="3" height="1" fill="#3a3a3a" />
<rect x="726.0" y="313" width="3" height="1" fill="#3a3a3a" />
<rect x="726.0" y="315" width="3" height="1" fill="#3a3a3a" />
<rect x="726.0" y="318" width="3" height="1" fill="#3a3a3a" />
<rect x="726.0" y="320" width="3" height="1" fill="#3a3a3a" />
<rect x="726.0" y="323" width="3" height="1" fill="#3a3a3a" />
<rect x="726.0" y="325" width="3" height="1" fill="#3a3a3a" />
<rect x="726.0" y="328" width="3" height="1" fill="#3a3a3a" />
<rect x="726.0" y="330" width="3" height="1" fill="#3a3a3a" />
<rect x="726.0" y="333" width="3" height="1" fill="#3a3a3a" />
<rect x="726.0" y="335" width="3" height="1" fill="#3a3a3a" />
<rect x="726.0" y="338" width="3" height="1" fill="#3a3a3a" />
<rect x="726.0" y="341" width="3" height="1" fill="#3a3a3a" />
<rect x="726.0" y="343" width="3" height="1" fill="#3a3a3a" />
<rect x="726.0" y="346" width="3" height="1" fill="#3a3a3a" />
<rect x="726.0" y="348" width="3" height="1" fill="#3a3a3a" />
<rect x="726.0" y="351" width="3" height="1" fill="#3a3a3a" />
<rect x="726.0" y="353" width="3" height="1" fill="#3a3a3a" />
<rect x="726.0" y="356" width="3" height="1" fill="#3a3a3a" />
<rect x="726.0" y="358" width="3" height="1" fill="#3a3a3a" />
<rect x="726.0" y="361" width="3" height="1" fill="#3a3a3a" />
<rect x="517" y="281" width="1" height="1" fill="#303030" />
<rect x="526" y="281" width="1" height="1" fill="#303030" />
<rect x="535" y="281" width="1" height="1" fill="#303030" />
<rect x="543" y="281" width="1" height="1" fill="#303030" />
<rect x="561" y="281" width="1" height="1" fill="#303030" />
<rect x="570" y="281" width="1" height="1" fill="#303030" />
<rect x="578" y="281" width="1" height="1" fill="#303030" />
<rect x="587" y="281" width="1" height="1" fill="#303030" />
<rect x="604" y="281" width="1" height="1" fill="#303030" />
<rect x="613" y="281" width="1" height="1" fill="#303030" />
<rect x="622" y="281" width="1" height="1" fill="#303030" />
<rect x="631" y="281" width="1" height="1" fill="#303030" />
<rect x="648" y="281" width="1" height="1" fill="#303030" />
<rect x="657" y="281" width="1" height="1" fill="#303030" />
<rect x="665" y="281" width="1" height="1" fill="#303030" />
<rect x="674" y="281" width="1" height="1" fill="#303030" />
<rect x="692" y="281" width="1" height="1" fill="#303030" />
<rect x="700" y="281" width="1" height="1" fill="#303030" />
<rect x="709" y="281" width="1" height="1" fill="#303030" />
<rect x="718" y="281" width="1" height="1" fill="#303030" />
<rect x="735" y="281" width="1" height="1" fill="#303030" />
<rect x="744" y="281" width="1" height="1" fill="#303030" />
<rect x="753" y="281" width="1" height="1" fill="#303030" />
<rect x="761" y="281" width="1" height="1" fill="#303030" />
<rect x="779" y="281" width="1" height="1" fill="#303030" />
<rect x="788" y="281" width="1" height="1" fill="#303030" />
<rect x="796" y="281" width="1" height="1" fill="#303030" />
<rect x="805" y="281" width="1" height="1" fill="#303030" />
<rect x="822" y="281" width="1" height="1" fill="#303030" />
<rect x="831" y="281" width="1" height="1" fill="#303030" />
<rect x="840" y="281" width="1" height="1" fill="#303030" />
<rect x="849" y="281" width="1" height="1" fill="#303030" />
<rect x="866" y="281" width="1" height="1" fill="#303030" />
<rect x="875" y="281" width="1" height="1" fill="#303030" />
<rect x="883" y="281" width="1" height="1" fill="#303030" />
<rect x="892" y="281" width="1" height="1" fill="#303030" />
<rect x="910" y="281" width="1" height="1" fill="#303030" />
<rect x="918" y="281" width="1" height="1" fill="#303030" />
<rect x="927" y="281" width="1" height="1" fill="#303030" />
<rect x="936" y="281" width="1" height="1" fill="#303030" />
<rect x="517" y="344" width="1" height="1" fill="#303030" />
<rect x="526" y="344" width="1" height="1" fill="#303030" />
<rect x="535" y="344" width="1" height="1" fill="#303030" />
<rect x="543" y="344" width="1" height="1" fill="#303030" />
<rect x="561" y="344" width="1" height="1" fill="#303030" />
<rect x="570" y="344" width="1" height="1" fill="#303030" />
<rect x="578" y="344" width="1" height="1" fill="#303030" />
<rect x="587" y="344" width="1" height="1" fill="#303030" />
<rect x="604" y="344" width="1" height="1" fill="#303030" />
<rect x="613" y="344" width="1" height="1" fill="#303030" />
<rect x="622" y="344" width="1" height="1" fill="#303030" />
<rect x="631" y="344" width="1" height="1" fill="#303030" />
<rect x="648" y="344" width="1" height="1" fill="#303030" />
<rect x="657" y="344" width="1" height="1" fill="#303030" />
<rect x="665" y="344" width="1" height="1" fill="#303030" />
<rect x="674" y="344" width="1" height="1" fill="#303030" />
<rect x="692" y="344" width="1" height="1" fill="#303030" />
<rect x="700" y="344" width="1" height="1" fill="#303030" />
<rect x="709" y="344" width="1" height="1" fill="#303030" />
<rect x="718" y="344" width="1" height="1" fill="#303030" />
<rect x="735" y="344" width="1" height="1" fill="#303030" />
<rect x="744" y="344" width="1" height="1" fill="#303030" />
<rect x="753" y="344" width="1" height="1" fill="#303030" />
<rect x="761" y="344" width="1" height="1" fill="#303030" />
<rect x="779" y="344" width="1" height="1" fill="#303030" />
<rect x="788" y="344" width="1" height="1" fill="#303030" />
<rect x="796" y="344" width="1" height="1" fill="#303030" />
<rect x="805" y="344" width="1" height="1" fill="#303030" />
<rect x="822" y="344" width="1" height="1" fill="#303030" />
<rect x="831" y="344" width="1" height="1" fill="#303030" />
<rect x="840" y="344" width="1" height="1" fill="#303030" />
<rect x="849" y="344" width="1" height="1" fill="#303030" />
<rect x="866" y="344" width="1" height="1" fill="#303030" />
<rect x="875" y="344" width="1" height="1" fill="#303030" />
<rect x="883" y="344" width="1" height="1" fill="#303030" />
<rect x="892" y="344" width="1" height="1" fill="#303030" />
<rect x="910" y="344" width="1" height="1" fill="#303030" />
<rect x="918" y="344" width="1" height="1" fill="#303030" />
<rect x="927" y="344" width="1" height="1" fill="#303030" />
<rect x="936" y="344" width="1" height="1" fill="#303030" />
<rect x="509.5" y="262.5" width="436.0" height="102.0" fill="none" stroke="#3a3a3a" stroke-width="1" rx="1.5"/>
<text x="31.5" y="25.1" font-size="7.2" fill="#d8d400" text-anchor="end" textLength="21.09" lengthAdjust="spacingAndGlyphs"  >800 mV</text>
<text x="31.5" y="46.65" font-size="7.2" fill="#d8d400" text-anchor="end" textLength="21.09" lengthAdjust="spacingAndGlyphs"  >400 mV</text>
<text x="31.5" y="72.19999999999999" font-size="7.2" fill="#d8d400" text-anchor="end" textLength="14.28" lengthAdjust="spacingAndGlyphs"  >0 mV</text>
<text x="31.5" y="97.75" font-size="7.2" fill="#d8d400" text-anchor="end" textLength="23.13" lengthAdjust="spacingAndGlyphs"  >-400 mV</text>
<text x="31.5" y="120.3" font-size="7.2" fill="#d8d400" text-anchor="end" textLength="23.13" lengthAdjust="spacingAndGlyphs"  >-800 mV</text>
<text x="33.0" y="128.7" font-size="6.8" fill="#d8d400" text-anchor="start" textLength="20.88" lengthAdjust="spacingAndGlyphs"  >-100 ms</text>
<text x="120.2" y="128.7" font-size="6.8" fill="#d8d400" text-anchor="middle" textLength="18.95" lengthAdjust="spacingAndGlyphs"  >100 ms</text>
<text x="207.4" y="128.7" font-size="6.8" fill="#d8d400" text-anchor="middle" textLength="18.95" lengthAdjust="spacingAndGlyphs"  >300 ms</text>
<text x="294.6" y="128.7" font-size="6.8" fill="#d8d400" text-anchor="middle" textLength="18.95" lengthAdjust="spacingAndGlyphs"  >500 ms</text>
<text x="381.8" y="128.7" font-size="6.8" fill="#d8d400" text-anchor="middle" textLength="18.95" lengthAdjust="spacingAndGlyphs"  >700 ms</text>
<text x="469.0" y="128.7" font-size="6.8" fill="#d8d400" text-anchor="end" textLength="18.95" lengthAdjust="spacingAndGlyphs"  >900 ms</text>
<text x="507.5" y="25.1" font-size="7.2" fill="#d8d400" text-anchor="end" textLength="26.20" lengthAdjust="spacingAndGlyphs"  >457.4 mV</text>
<text x="507.5" y="46.65" font-size="7.2" fill="#d8d400" text-anchor="end" textLength="26.20" lengthAdjust="spacingAndGlyphs"  >233.4 mV</text>
<text x="507.5" y="72.19999999999999" font-size="7.2" fill="#d8d400" text-anchor="end" textLength="19.39" lengthAdjust="spacingAndGlyphs"  >9.4 mV</text>
<text x="507.5" y="97.75" font-size="7.2" fill="#d8d400" text-anchor="end" textLength="28.23" lengthAdjust="spacingAndGlyphs"  >-214.6 mV</text>
<text x="507.5" y="120.3" font-size="7.2" fill="#d8d400" text-anchor="end" textLength="28.23" lengthAdjust="spacingAndGlyphs"  >-438.6 mV</text>
<text x="509.0" y="128.7" font-size="6.8" fill="#d8d400" text-anchor="start" textLength="26.99" lengthAdjust="spacingAndGlyphs"  >536.35 ms</text>
<text x="596.2" y="128.7" font-size="6.8" fill="#d8d400" text-anchor="middle" textLength="26.99" lengthAdjust="spacingAndGlyphs"  >546.35 ms</text>
<text x="683.4" y="128.7" font-size="6.8" fill="#d8d400" text-anchor="middle" textLength="26.99" lengthAdjust="spacingAndGlyphs"  >556.35 ms</text>
<text x="770.6" y="128.7" font-size="6.8" fill="#d8d400" text-anchor="middle" textLength="26.99" lengthAdjust="spacingAndGlyphs"  >566.35 ms</text>
<text x="857.8" y="128.7" font-size="6.8" fill="#d8d400" text-anchor="middle" textLength="26.99" lengthAdjust="spacingAndGlyphs"  >576.35 ms</text>
<text x="945.0" y="128.7" font-size="6.8" fill="#d8d400" text-anchor="end" textLength="26.99" lengthAdjust="spacingAndGlyphs"  >586.35 ms</text>
<text x="31.5" y="143.6" font-size="7.2" fill="#d0107a" text-anchor="end" textLength="21.09" lengthAdjust="spacingAndGlyphs"  >800 mV</text>
<text x="31.5" y="167.1" font-size="7.2" fill="#d0107a" text-anchor="end" textLength="21.09" lengthAdjust="spacingAndGlyphs"  >400 mV</text>
<text x="31.5" y="193.6" font-size="7.2" fill="#d0107a" text-anchor="end" textLength="14.28" lengthAdjust="spacingAndGlyphs"  >0 mV</text>
<text x="31.5" y="220.1" font-size="7.2" fill="#d0107a" text-anchor="end" textLength="23.13" lengthAdjust="spacingAndGlyphs"  >-400 mV</text>
<text x="31.5" y="243.6" font-size="7.2" fill="#d0107a" text-anchor="end" textLength="23.13" lengthAdjust="spacingAndGlyphs"  >-800 mV</text>
<text x="33.0" y="252" font-size="6.8" fill="#d0107a" text-anchor="start" textLength="20.88" lengthAdjust="spacingAndGlyphs"  >-100 ms</text>
<text x="120.2" y="252" font-size="6.8" fill="#d0107a" text-anchor="middle" textLength="18.95" lengthAdjust="spacingAndGlyphs"  >100 ms</text>
<text x="207.4" y="252" font-size="6.8" fill="#d0107a" text-anchor="middle" textLength="18.95" lengthAdjust="spacingAndGlyphs"  >300 ms</text>
<text x="294.6" y="252" font-size="6.8" fill="#d0107a" text-anchor="middle" textLength="18.95" lengthAdjust="spacingAndGlyphs"  >500 ms</text>
<text x="381.8" y="252" font-size="6.8" fill="#d0107a" text-anchor="middle" textLength="18.95" lengthAdjust="spacingAndGlyphs"  >700 ms</text>
<text x="469.0" y="252" font-size="6.8" fill="#d0107a" text-anchor="end" textLength="18.95" lengthAdjust="spacingAndGlyphs"  >900 ms</text>
<text x="507.5" y="143.6" font-size="7.2" fill="#d0107a" text-anchor="end" textLength="14.29" lengthAdjust="spacingAndGlyphs"  >3.5 V</text>
<text x="507.5" y="167.1" font-size="7.2" fill="#d0107a" text-anchor="end" textLength="14.29" lengthAdjust="spacingAndGlyphs"  >2.5 V</text>
<text x="507.5" y="193.6" font-size="7.2" fill="#d0107a" text-anchor="end" textLength="14.29" lengthAdjust="spacingAndGlyphs"  >1.5 V</text>
<text x="507.5" y="220.1" font-size="7.2" fill="#d0107a" text-anchor="end" textLength="21.09" lengthAdjust="spacingAndGlyphs"  >500 mV</text>
<text x="507.5" y="243.6" font-size="7.2" fill="#d0107a" text-anchor="end" textLength="23.13" lengthAdjust="spacingAndGlyphs"  >-500 mV</text>
<text x="509.0" y="252" font-size="6.8" fill="#d0107a" text-anchor="start" textLength="26.99" lengthAdjust="spacingAndGlyphs"  >536.35 ms</text>
<text x="596.2" y="252" font-size="6.8" fill="#d0107a" text-anchor="middle" textLength="26.99" lengthAdjust="spacingAndGlyphs"  >546.35 ms</text>
<text x="683.4" y="252" font-size="6.8" fill="#d0107a" text-anchor="middle" textLength="26.99" lengthAdjust="spacingAndGlyphs"  >556.35 ms</text>
<text x="770.6" y="252" font-size="6.8" fill="#d0107a" text-anchor="middle" textLength="26.99" lengthAdjust="spacingAndGlyphs"  >566.35 ms</text>
<text x="857.8" y="252" font-size="6.8" fill="#d0107a" text-anchor="middle" textLength="26.99" lengthAdjust="spacingAndGlyphs"  >576.35 ms</text>
<text x="945.0" y="252" font-size="6.8" fill="#d0107a" text-anchor="end" textLength="26.99" lengthAdjust="spacingAndGlyphs"  >586.35 ms</text>
<text x="31.5" y="267.6" font-size="7.2" fill="#20d020" text-anchor="end" textLength="23.13" lengthAdjust="spacingAndGlyphs"  >-697 mV</text>
<text x="31.5" y="290.1" font-size="7.2" fill="#20d020" text-anchor="end" textLength="23.13" lengthAdjust="spacingAndGlyphs"  >-897 mV</text>
<text x="31.5" y="315.6" font-size="7.2" fill="#20d020" text-anchor="end" textLength="23.14" lengthAdjust="spacingAndGlyphs"  >-1.097 V</text>
<text x="31.5" y="341.1" font-size="7.2" fill="#20d020" text-anchor="end" textLength="23.14" lengthAdjust="spacingAndGlyphs"  >-1.297 V</text>
<text x="31.5" y="363.6" font-size="7.2" fill="#20d020" text-anchor="end" textLength="23.14" lengthAdjust="spacingAndGlyphs"  >-1.497 V</text>
<text x="33.0" y="372" font-size="6.8" fill="#20d020" text-anchor="start" textLength="20.88" lengthAdjust="spacingAndGlyphs"  >-100 ms</text>
<text x="120.2" y="372" font-size="6.8" fill="#20d020" text-anchor="middle" textLength="18.95" lengthAdjust="spacingAndGlyphs"  >100 ms</text>
<text x="207.4" y="372" font-size="6.8" fill="#20d020" text-anchor="middle" textLength="18.95" lengthAdjust="spacingAndGlyphs"  >300 ms</text>
<text x="294.6" y="372" font-size="6.8" fill="#20d020" text-anchor="middle" textLength="18.95" lengthAdjust="spacingAndGlyphs"  >500 ms</text>
<text x="381.8" y="372" font-size="6.8" fill="#20d020" text-anchor="middle" textLength="18.95" lengthAdjust="spacingAndGlyphs"  >700 ms</text>
<text x="469.0" y="372" font-size="6.8" fill="#20d020" text-anchor="end" textLength="18.95" lengthAdjust="spacingAndGlyphs"  >900 ms</text>
<text x="507.5" y="267.6" font-size="7.2" fill="#20c4d8" text-anchor="end" textLength="23.13" lengthAdjust="spacingAndGlyphs"  >-402 mV</text>
<text x="507.5" y="290.1" font-size="7.2" fill="#20c4d8" text-anchor="end" textLength="23.13" lengthAdjust="spacingAndGlyphs"  >-802 mV</text>
<text x="507.5" y="315.6" font-size="7.2" fill="#20c4d8" text-anchor="end" textLength="23.14" lengthAdjust="spacingAndGlyphs"  >-1.202 V</text>
<text x="507.5" y="341.1" font-size="7.2" fill="#20c4d8" text-anchor="end" textLength="23.14" lengthAdjust="spacingAndGlyphs"  >-1.602 V</text>
<text x="507.5" y="363.6" font-size="7.2" fill="#20c4d8" text-anchor="end" textLength="23.14" lengthAdjust="spacingAndGlyphs"  >-2.002 V</text>
<text x="509.0" y="372" font-size="6.8" fill="#20c4d8" text-anchor="start" textLength="26.15" lengthAdjust="spacingAndGlyphs"  >Δ102.5 µs</text>
<text x="596.2" y="372" font-size="6.8" fill="#20c4d8" text-anchor="middle" textLength="22.94" lengthAdjust="spacingAndGlyphs"  >Δ61.5 µs</text>
<text x="683.4" y="372" font-size="6.8" fill="#20c4d8" text-anchor="middle" textLength="22.94" lengthAdjust="spacingAndGlyphs"  >Δ20.5 µs</text>
<text x="770.6" y="372" font-size="6.8" fill="#20c4d8" text-anchor="middle" textLength="22.94" lengthAdjust="spacingAndGlyphs"  >Δ20.5 µs</text>
<text x="857.8" y="372" font-size="6.8" fill="#20c4d8" text-anchor="middle" textLength="22.94" lengthAdjust="spacingAndGlyphs"  >Δ61.5 µs</text>
<text x="945.0" y="372" font-size="6.8" fill="#20c4d8" text-anchor="end" textLength="26.15" lengthAdjust="spacingAndGlyphs"  >Δ102.5 µs</text>
<g clip-path="url(#c1)">
<rect x="33" y="68" width="180" height="3.2" fill="#8c8800" />
<polygon points="211.5,59.8 213.6,59.8 213.6,52.9 215.8,52.9 215.8,50.0 217.9,50.0 217.9,45.1 220.0,45.1 220.0,95.1 217.9,95.1 217.9,90.0 215.8,90.0 215.8,86.9 213.6,86.9 213.6,79.8 211.5,79.8" fill="url(#gY)" />
<polygon points="219.5,45.2 220.7,44.4 221.9,44.5 223.1,45.1 224.3,44.8 225.5,44.9 226.7,44.6 227.9,44.5 229.1,45.3 230.3,45.4 231.5,44.4 232.7,44.9 233.9,45.3 235.1,46.0 236.3,45.2 237.5,44.6 238.7,45.0 239.9,43.9 241.1,43.7 242.3,44.5 243.5,44.3 244.7,43.4 245.9,42.7 247.1,43.2 248.3,43.1 249.5,42.6 250.7,42.9 251.9,42.4 253.1,41.9 254.3,41.6 255.5,41.7 256.7,41.5 257.9,41.2 259.1,40.7 260.3,40.7 261.5,40.8 262.7,39.6 263.9,39.8 265.1,39.7 266.3,40.3 267.5,39.3 268.7,39.5 269.9,40.4 271.1,40.1 272.3,39.6 273.5,39.6 274.7,39.4 275.9,40.0 277.1,39.5 278.3,39.7 279.5,40.1 280.7,39.8 281.9,39.4 283.1,39.5 284.3,39.9 285.5,39.8 286.7,40.5 287.9,40.2 289.1,39.5 290.0,40.0 290.0,90.7 289.1,91.2 287.9,91.3 286.7,91.3 285.5,90.9 284.3,91.0 283.1,91.1 281.9,91.4 280.7,91.1 279.5,91.0 278.3,91.1 277.1,90.5 275.9,90.6 274.7,91.3 273.5,91.7 272.3,91.3 271.1,91.3 269.9,91.2 268.7,91.9 267.5,92.6 266.3,92.6 265.1,92.5 263.9,93.1 262.7,92.6 261.5,93.1 260.3,93.9 259.1,93.6 257.9,93.7 256.7,93.7 255.5,94.2 254.3,94.9 253.1,94.0 251.9,95.1 250.7,95.4 249.5,95.7 248.3,95.7 247.1,96.0 245.9,95.9 244.7,96.1 243.5,96.2 242.3,95.9 241.1,97.1 239.9,97.0 238.7,96.7 237.5,97.3 236.3,97.5 235.1,97.6 233.9,97.8 232.7,95.6 231.5,95.7 230.3,95.7 229.1,95.5 227.9,95.0 226.7,95.3 225.5,95.2 224.3,95.7 223.1,96.0 221.9,96.0 220.7,96.0 219.5,96.0" fill="url(#gY)" />
<rect x="231.5" y="35" width="0.9" height="10" fill="#5a5800" />
<path d="M290 61 Q300 67 317 69.5" stroke="#a8a400" stroke-width="3" fill="none" />
<path d="M309 68 L317 70" stroke="#c4c000" stroke-width="3.2" fill="none" />
<rect x="308.5" y="70" width="0.8" height="8" fill="#606000" />
<polygon points="317.5,59.8 319.2,59.8 319.2,52.7 321.0,52.7 321.0,49.6 322.8,49.6 322.8,44.5 324.5,44.5 324.5,95.0 322.8,95.0 322.8,90.0 321.0,90.0 321.0,87.0 319.2,87.0 319.2,80.0 317.5,80.0" fill="url(#gYb)" />
<rect x="324" y="44.5" width="8.5" height="50.5" fill="url(#gYb)" />
<polygon points="332.5,44.2 333.7,43.7 334.9,43.8 336.1,44.4 337.3,44.5 338.5,44.5 339.7,43.7 340.9,44.3 342.1,44.4 343.3,43.9 344.5,44.2 345.7,44.4 346.9,44.3 348.1,44.0 349.3,44.3 350.5,44.2 351.7,43.8 352.9,44.0 354.1,44.2 355.3,44.0 356.5,44.5 357.7,44.1 358.9,44.1 360.1,44.3 361.3,44.4 362.5,43.6 363.7,44.0 364.9,44.3 366.1,43.9 367.3,43.7 368.5,44.5 369.7,44.5 370.9,44.4 372.1,43.8 373.3,44.3 374.5,43.8 375.7,43.8 376.9,44.0 378.1,44.3 379.3,43.5 380.5,43.7 381.7,44.0 382.9,44.3 384.1,43.9 385.3,44.1 386.5,43.9 387.7,44.2 388.9,43.9 390.1,44.4 391.3,44.2 392.5,43.5 393.7,43.6 394.9,44.2 396.1,43.6 397.3,44.2 398.5,43.6 399.7,43.8 400.9,44.1 402.1,44.2 403.3,44.5 404.5,43.6 405.7,44.5 406.9,43.7 408.1,43.5 409.3,43.9 410.5,44.3 411.7,43.6 412.9,43.5 414.1,43.8 415.3,44.0 416.5,44.1 417.7,44.2 418.9,44.3 420.1,43.8 421.3,44.1 422.5,44.3 423.7,44.4 424.9,43.8 426.1,44.2 427.3,44.0 428.5,44.2 429.7,43.6 430.9,43.6 432.1,44.5 433.3,44.3 434.5,44.2 435.7,43.5 436.9,43.7 438.1,44.2 439.3,44.3 440.5,43.8 441.7,43.7 442.9,43.6 444.1,44.2 445.3,43.6 446.5,43.8 447.7,44.0 448.9,43.5 450.1,44.3 451.3,43.8 452.5,44.4 453.7,44.3 454.9,43.6 456.1,44.3 457.3,43.7 458.5,43.9 459.7,43.7 460.9,44.1 462.1,44.2 463.3,44.2 464.5,43.6 465.7,43.9 466.9,43.5 468.1,43.6 469.0,44.4 469.0,95.6 468.1,95.1 466.9,95.0 465.7,95.1 464.5,95.9 463.3,95.8 462.1,95.8 460.9,95.3 459.7,95.6 458.5,95.8 457.3,95.4 456.1,95.6 454.9,95.2 453.7,95.1 452.5,95.3 451.3,95.9 450.1,95.6 448.9,95.9 447.7,95.5 446.5,95.3 445.3,95.8 444.1,95.8 442.9,95.0 441.7,95.7 440.5,95.1 439.3,95.1 438.1,95.9 436.9,95.0 435.7,95.2 434.5,96.0 433.3,95.4 432.1,95.1 430.9,95.2 429.7,95.2 428.5,95.7 427.3,95.1 426.1,95.9 424.9,95.4 423.7,96.0 422.5,95.9 421.3,95.3 420.1,95.3 418.9,95.5 417.7,95.1 416.5,95.7 415.3,95.0 414.1,95.0 412.9,96.0 411.7,95.3 410.5,95.6 409.3,95.4 408.1,95.3 406.9,95.1 405.7,95.9 404.5,96.0 403.3,96.0 402.1,95.1 400.9,95.2 399.7,95.6 398.5,96.0 397.3,95.5 396.1,95.7 394.9,95.7 393.7,95.3 392.5,95.5 391.3,95.3 390.1,95.2 388.9,95.1 387.7,95.3 386.5,96.0 385.3,95.4 384.1,95.7 382.9,95.6 381.7,95.9 380.5,95.4 379.3,95.3 378.1,95.3 376.9,95.3 375.7,95.8 374.5,95.9 373.3,95.3 372.1,95.3 370.9,95.5 369.7,95.6 368.5,95.6 367.3,95.2 366.1,95.0 364.9,95.2 363.7,95.1 362.5,95.6 361.3,95.1 360.1,95.1 358.9,95.6 357.7,95.3 356.5,95.8 355.3,95.5 354.1,95.9 352.9,95.2 351.7,95.5 350.5,95.8 349.3,95.1 348.1,95.9 346.9,95.2 345.7,95.8 344.5,96.0 343.3,95.8 342.1,95.3 340.9,95.1 339.7,95.5 338.5,95.9 337.3,95.3 336.1,95.9 334.9,95.1 333.7,95.9 332.5,95.0" fill="url(#gY)" />
<polygon points="509.0,63.7 510.5,63.3 512.0,63.4 513.5,63.4 515.0,63.4 516.5,63.6 518.0,63.6 519.5,64.1 521.0,63.9 522.5,64.1 524.0,63.7 525.5,63.8 527.0,64.2 528.5,64.3 530.0,63.6 531.5,63.8 533.0,64.0 534.5,64.1 536.0,63.9 537.5,64.2 539.0,64.3 540.5,64.4 542.0,64.4 543.5,64.7 545.0,64.2 546.5,64.4 548.0,64.3 549.5,64.8 551.0,64.5 552.5,64.8 554.0,64.8 555.5,64.7 557.0,64.3 558.5,64.7 560.0,64.7 561.5,64.6 563.0,64.9 564.5,65.1 566.0,64.7 567.5,64.8 569.0,64.7 570.5,64.9 572.0,64.7 573.5,64.7 575.0,65.1 576.5,64.9 578.0,65.0 579.5,65.2 581.0,65.1 582.5,65.0 584.0,64.8 585.5,64.8 587.0,65.3 588.5,65.1 590.0,65.6 591.5,65.6 593.0,65.3 594.5,65.0 596.0,65.6 597.5,65.1 599.0,65.1 600.5,65.6 602.0,65.3 603.5,65.2 605.0,65.6 606.5,65.4 608.0,65.4 609.5,65.5 611.0,65.3 612.5,65.3 614.0,65.3 615.5,65.7 617.0,66.0 618.5,66.0 620.0,66.0 621.5,65.8 623.0,65.7 624.5,66.2 626.0,65.8 627.5,65.8 629.0,66.1 630.0,66.0 630.0,72.5 629.0,73.0 627.5,72.4 626.0,73.1 624.5,73.0 623.0,72.8 621.5,72.5 620.0,73.0 618.5,73.0 617.0,72.3 615.5,72.8 614.0,72.8 612.5,72.7 611.0,72.7 609.5,72.5 608.0,72.8 606.5,72.8 605.0,72.3 603.5,72.6 602.0,72.3 600.5,72.1 599.0,72.2 597.5,72.0 596.0,72.6 594.5,72.6 593.0,71.9 591.5,72.3 590.0,72.1 588.5,71.9 587.0,72.0 585.5,71.9 584.0,72.3 582.5,71.7 581.0,71.8 579.5,72.0 578.0,71.6 576.5,72.1 575.0,72.1 573.5,72.2 572.0,71.7 570.5,71.7 569.0,71.9 567.5,71.7 566.0,71.9 564.5,71.6 563.0,72.0 561.5,72.0 560.0,72.0 558.5,72.1 557.0,71.8 555.5,71.7 554.0,72.0 552.5,71.9 551.0,71.7 549.5,71.5 548.0,71.4 546.5,71.2 545.0,71.8 543.5,71.2 542.0,71.7 540.5,71.5 539.0,71.8 537.5,71.6 536.0,71.8 534.5,71.1 533.0,71.4 531.5,71.4 530.0,71.2 528.5,71.3 527.0,71.2 525.5,71.3 524.0,70.8 522.5,71.2 521.0,71.1 519.5,71.0 518.0,71.1 516.5,71.3 515.0,71.2 513.5,71.1 512.0,71.2 510.5,70.9 509.0,70.8" fill="#ffff00" />
<polygon points="630.0,53.9 631.2,53.7 632.4,53.4 633.6,53.2 634.8,53.2 636.0,53.5 637.2,53.1 638.4,53.5 639.6,53.2 640.8,53.6 642.0,53.3 643.2,53.1 644.4,53.7 645.6,53.8 646.8,53.4 648.0,53.5 649.2,53.6 650.4,53.9 651.6,53.6 652.8,53.6 654.0,53.6 655.2,53.2 656.4,53.4 657.6,53.3 658.8,53.2 660.0,53.3 661.2,53.5 662.4,53.3 663.6,53.4 664.8,53.4 666.0,53.4 667.2,53.6 667.2,85.5 666.0,85.5 664.8,85.7 663.6,85.6 662.4,85.7 661.2,85.6 660.0,85.7 658.8,85.5 657.6,85.3 656.4,85.2 655.2,85.6 654.0,85.7 652.8,85.4 651.6,85.1 650.4,85.7 649.2,85.4 648.0,85.4 646.8,85.0 645.6,85.4 644.4,85.6 643.2,85.3 642.0,85.3 640.8,85.5 639.6,85.0 638.4,85.4 637.2,85.8 636.0,85.6 634.8,85.3 633.6,85.6 632.4,85.5 631.2,85.2 630.0,85.2" fill="#ffff00" />
<polygon points="667.0,46.3 668.2,46.8 669.4,46.9 670.6,46.3 671.8,46.6 673.0,46.7 674.2,46.6 675.4,46.4 676.6,46.9 677.8,46.5 679.0,46.4 680.2,46.3 681.4,46.8 682.6,46.5 683.8,46.8 685.0,46.6 686.2,46.9 687.4,46.4 688.6,46.3 689.8,46.7 691.0,46.8 692.2,46.2 693.4,46.4 694.6,46.3 695.8,47.0 697.0,46.3 698.2,46.5 699.4,46.7 700.6,46.7 701.8,46.4 703.0,46.4 704.2,46.8 705.4,46.5 705.6,46.9 705.6,93.4 705.4,93.0 704.2,93.3 703.0,93.2 701.8,93.1 700.6,92.8 699.4,93.0 698.2,92.7 697.0,92.7 695.8,93.2 694.6,92.9 693.4,93.2 692.2,92.8 691.0,93.2 689.8,93.2 688.6,92.8 687.4,92.7 686.2,92.9 685.0,93.0 683.8,92.7 682.6,92.7 681.4,92.6 680.2,93.1 679.0,93.3 677.8,92.8 676.6,92.6 675.4,93.2 674.2,93.3 673.0,93.4 671.8,93.1 670.6,92.9 669.4,93.3 668.2,92.7 667.0,93.2" fill="#ffff00" />
<polygon points="705.3,39.9 706.5,39.6 707.7,39.6 708.9,39.7 710.1,39.8 711.3,39.8 712.5,39.3 713.7,39.6 714.9,39.5 716.1,39.8 717.3,39.4 718.5,39.7 719.7,39.5 720.9,39.2 722.1,39.1 723.3,40.0 724.5,39.3 725.7,39.2 726.9,39.7 728.1,39.7 729.3,39.5 730.5,39.2 731.7,39.6 732.9,39.2 734.1,39.3 735.3,39.9 736.5,39.2 737.7,40.0 738.9,39.9 740.1,39.4 741.3,39.9 742.5,39.7 743.7,39.9 744.9,39.6 746.1,39.2 747.3,39.2 748.5,40.0 749.7,39.9 750.9,39.2 752.1,40.0 753.3,39.8 754.5,39.9 755.7,39.9 756.9,40.0 758.1,39.4 759.3,39.3 760.5,39.4 761.7,39.2 762.9,39.4 764.1,39.6 765.3,39.4 766.5,39.1 767.7,39.4 768.9,39.8 770.1,39.9 771.3,39.2 772.5,39.5 773.7,39.7 774.9,39.5 776.1,39.5 777.0,39.5 777.0,99.8 776.1,100.0 774.9,100.1 773.7,99.9 772.5,100.5 771.3,100.1 770.1,100.3 768.9,100.3 767.7,100.4 766.5,100.3 765.3,100.4 764.1,99.9 762.9,100.6 761.7,99.8 760.5,100.5 759.3,100.5 758.1,100.5 756.9,99.7 755.7,99.8 754.5,100.4 753.3,100.1 752.1,100.0 750.9,100.6 749.7,99.7 748.5,100.2 747.3,100.1 746.1,99.8 744.9,100.1 743.7,100.3 742.5,100.5 741.3,99.7 740.1,100.2 738.9,99.8 737.7,100.4 736.5,99.8 735.3,99.7 734.1,100.0 732.9,100.4 731.7,100.0 730.5,99.8 729.3,100.4 728.1,100.4 726.9,100.5 725.7,100.0 724.5,100.1 723.3,99.9 722.1,100.2 720.9,100.0 719.7,100.0 718.5,100.4 717.3,100.6 716.1,100.2 714.9,99.8 713.7,100.3 712.5,100.1 711.3,100.6 710.1,100.3 708.9,100.5 707.7,100.3 706.5,100.2 705.3,100.5" fill="#ffff00" />
<polygon points="776.8,27.4 778.0,28.1 779.2,28.3 780.4,28.0 781.6,27.8 782.8,28.4 784.0,28.1 785.2,27.8 786.4,28.4 787.6,27.4 788.8,27.7 790.0,28.1 791.2,28.1 792.4,28.0 793.6,28.1 794.8,27.5 796.0,27.8 797.2,27.8 798.4,28.3 799.6,27.3 800.8,28.1 802.0,28.1 803.2,28.4 804.4,27.2 805.6,27.9 806.8,27.3 808.0,27.3 809.2,27.2 810.4,27.4 811.6,27.3 812.8,27.3 814.0,27.5 815.2,28.3 816.4,27.8 817.6,27.8 818.8,27.2 820.0,27.5 821.2,27.6 822.4,27.5 823.6,28.0 824.8,27.3 826.0,27.7 827.2,28.0 828.4,27.9 829.6,27.2 830.8,27.8 832.0,28.3 833.2,28.3 834.4,27.6 835.6,27.8 836.8,27.3 838.0,28.3 839.2,28.0 840.4,27.6 841.6,28.4 842.8,28.4 844.0,27.8 845.2,28.2 846.4,28.4 847.6,28.2 848.8,27.7 850.0,27.8 851.2,28.4 852.4,28.4 853.6,27.4 854.8,27.7 856.0,28.3 857.2,27.4 858.4,28.5 859.6,28.0 860.8,27.4 862.0,27.6 863.2,28.1 864.4,27.3 865.6,27.7 866.8,27.4 868.0,27.3 869.2,27.9 870.4,27.6 871.6,27.8 872.8,27.3 874.0,27.5 875.2,27.6 876.4,27.4 877.6,27.2 878.8,28.2 880.0,28.2 881.2,27.5 882.4,27.5 883.6,27.8 884.8,27.9 886.0,28.0 887.2,27.4 888.4,27.5 889.6,27.7 890.8,28.4 892.0,27.4 893.2,27.9 894.4,28.3 895.6,28.1 896.8,27.6 898.0,28.5 899.2,28.3 900.4,28.1 901.6,27.3 902.8,27.5 904.0,27.2 905.2,27.8 906.4,27.8 907.6,27.8 908.8,27.8 910.0,27.8 911.2,27.4 912.4,27.3 913.6,28.0 914.8,27.7 916.0,28.1 917.2,28.1 918.4,27.8 919.6,27.7 920.8,27.8 922.0,27.2 923.2,28.3 924.4,27.7 925.6,27.2 926.8,27.5 928.0,27.8 929.2,28.0 930.4,28.0 931.6,27.3 932.8,27.3 934.0,27.6 935.2,27.3 936.4,27.3 937.6,27.4 938.8,28.0 940.0,27.9 941.2,27.5 942.4,28.0 943.6,27.5 944.7,27.9 944.7,112.9 943.6,113.1 942.4,112.7 941.2,113.0 940.0,113.0 938.8,112.5 937.6,112.7 936.4,112.8 935.2,113.6 934.0,113.3 932.8,112.9 931.6,113.8 930.4,112.8 929.2,113.2 928.0,113.5 926.8,113.4 925.6,113.1 924.4,113.5 923.2,113.1 922.0,113.4 920.8,113.1 919.6,113.8 918.4,113.4 917.2,112.6 916.0,112.7 914.8,113.8 913.6,112.8 912.4,112.5 911.2,112.8 910.0,113.1 908.8,113.7 907.6,113.0 906.4,113.4 905.2,113.6 904.0,112.6 902.8,113.3 901.6,113.8 900.4,113.2 899.2,113.2 898.0,113.0 896.8,113.7 895.6,113.8 894.4,112.6 893.2,113.2 892.0,113.0 890.8,113.4 889.6,112.7 888.4,112.8 887.2,112.9 886.0,113.1 884.8,113.5 883.6,113.6 882.4,113.5 881.2,113.4 880.0,112.6 878.8,113.0 877.6,113.4 876.4,112.9 875.2,113.2 874.0,113.7 872.8,112.7 871.6,113.6 870.4,112.6 869.2,113.0 868.0,113.7 866.8,112.8 865.6,113.2 864.4,113.0 863.2,113.7 862.0,113.8 860.8,112.9 859.6,113.1 858.4,113.7 857.2,113.2 856.0,112.8 854.8,113.5 853.6,112.9 852.4,113.1 851.2,112.5 850.0,113.8 848.8,113.4 847.6,113.7 846.4,113.8 845.2,112.8 844.0,113.2 842.8,113.1 841.6,113.5 840.4,113.6 839.2,112.8 838.0,112.9 836.8,113.4 835.6,113.0 834.4,112.7 833.2,112.8 832.0,113.2 830.8,113.3 829.6,113.7 828.4,113.2 827.2,113.3 826.0,112.7 824.8,113.0 823.6,112.9 822.4,113.4 821.2,112.8 820.0,112.8 818.8,113.0 817.6,113.1 816.4,112.9 815.2,113.3 814.0,112.7 812.8,113.6 811.6,113.4 810.4,113.2 809.2,112.6 808.0,112.9 806.8,113.4 805.6,113.3 804.4,113.6 803.2,113.7 802.0,112.9 800.8,113.1 799.6,112.9 798.4,112.7 797.2,112.7 796.0,112.8 794.8,112.6 793.6,113.2 792.4,113.4 791.2,113.2 790.0,113.4 788.8,112.8 787.6,112.8 786.4,113.2 785.2,113.6 784.0,113.0 782.8,112.5 781.6,112.5 780.4,112.9 779.2,113.3 778.0,112.6 776.8,112.8" fill="#ffff00" />
<rect x="33" y="189.5" width="179" height="3.2" fill="#d8107a" />
<polygon points="211.5,182.8 213.4,182.8 213.4,177.1 215.2,177.1 215.2,174.6 217.1,174.6 217.1,170.5 219.0,170.5 219.0,212.4 217.1,212.4 217.1,208.1 215.2,208.1 215.2,205.6 213.4,205.6 213.4,199.6 211.5,199.6" fill="url(#gM)" />
<polygon points="218.5,170.0 219.7,169.7 220.9,170.2 222.1,170.0 223.3,170.1 224.5,170.5 225.7,170.2 226.9,170.4 228.1,170.3 229.3,169.9 230.5,170.0 231.7,170.5 232.9,170.4 233.0,169.9 233.0,212.5 232.9,212.7 231.7,212.6 230.5,212.4 229.3,212.4 228.1,212.5 226.9,212.7 225.7,213.1 224.5,212.9 223.3,212.6 222.1,212.9 220.9,212.6 219.7,212.8 218.5,212.7" fill="url(#gM)" />
<path d="M233.5 224 Q240 199 256 193.5 Q266 191 289.5 191" stroke="#e0127e" stroke-width="2.6" fill="none" />
<rect x="289" y="160" width="1" height="31" fill="#e0127e" />
<path d="M289.8 160.5 Q295 180 317 188" stroke="#e0127e" stroke-width="2.6" fill="none" />
<rect x="206.8" y="191" width="0.8" height="27" fill="#80003c" />
<rect x="307.5" y="191" width="0.8" height="25" fill="#80003c" />
<polygon points="317.5,182.8 319.1,182.8 319.1,177.1 320.8,177.1 320.8,174.6 322.4,174.6 322.4,170.5 324.0,170.5 324.0,212.2 322.4,212.2 322.4,208.0 320.8,208.0 320.8,205.4 319.1,205.4 319.1,199.5 317.5,199.5" fill="url(#gM)" />
<polygon points="323.5,169.7 324.7,170.3 325.9,169.9 327.1,170.0 328.3,169.8 329.5,170.1 330.7,169.8 331.9,170.2 333.1,170.0 334.3,170.0 335.5,170.1 336.7,170.1 337.9,170.1 339.1,170.2 340.3,169.8 341.5,170.0 342.7,170.1 343.9,170.6 345.1,170.1 346.3,170.4 347.5,170.4 348.7,170.2 349.9,170.1 351.1,170.4 352.3,170.4 353.5,170.1 354.7,170.2 355.9,170.2 357.1,170.5 358.3,170.3 359.5,170.0 360.7,170.1 361.9,170.1 363.1,169.8 364.3,169.9 365.5,170.0 366.7,170.6 367.9,170.3 369.1,170.0 370.3,170.5 371.5,169.8 372.7,170.5 373.9,169.8 375.1,170.4 376.3,169.8 377.5,169.8 378.7,170.3 379.9,169.8 381.1,170.5 382.3,169.8 383.5,170.3 384.7,170.2 385.9,170.5 387.1,170.1 388.3,170.4 389.5,170.0 390.7,169.9 391.9,170.1 393.1,170.6 394.3,169.7 395.5,169.8 396.7,170.0 397.9,170.3 399.1,170.1 400.3,169.8 401.5,170.2 402.7,169.9 403.9,170.1 405.1,170.2 406.3,169.8 407.5,170.2 408.7,170.1 409.9,170.6 411.1,170.2 412.3,170.6 413.5,170.0 414.7,170.6 415.9,170.6 417.1,170.5 418.3,170.5 419.5,170.1 420.7,170.3 421.9,170.4 423.1,169.7 424.3,169.8 425.5,170.0 426.7,169.9 427.9,169.9 429.1,170.4 430.3,169.9 431.5,170.4 432.7,170.1 433.9,170.3 435.1,170.5 436.3,169.9 437.5,169.8 438.7,170.3 439.9,169.8 441.1,170.3 442.3,170.0 443.5,169.7 444.7,169.9 445.9,170.5 447.1,170.2 448.3,170.3 449.5,170.3 450.7,169.9 451.9,170.2 453.1,170.0 454.3,170.0 455.5,170.1 456.7,170.5 457.9,170.0 459.1,169.8 460.3,170.4 461.5,170.0 462.7,170.2 463.9,170.3 465.1,170.0 466.3,169.7 467.5,170.6 468.7,169.8 469.0,170.3 469.0,212.9 468.7,212.3 467.5,212.7 466.3,212.2 465.1,212.4 463.9,213.0 462.7,212.7 461.5,212.8 460.3,212.5 459.1,212.5 457.9,212.5 456.7,212.8 455.5,212.8 454.3,212.3 453.1,212.5 451.9,212.6 450.7,212.6 449.5,212.9 448.3,212.9 447.1,212.2 445.9,212.4 444.7,212.2 443.5,212.1 442.3,212.2 441.1,212.3 439.9,212.8 438.7,212.7 437.5,212.8 436.3,212.4 435.1,212.2 433.9,213.0 432.7,212.8 431.5,213.0 430.3,212.1 429.1,212.5 427.9,212.7 426.7,212.8 425.5,212.9 424.3,212.6 423.1,212.5 421.9,212.1 420.7,212.8 419.5,213.0 418.3,212.9 417.1,212.7 415.9,212.4 414.7,212.3 413.5,212.8 412.3,212.9 411.1,213.0 409.9,212.3 408.7,212.6 407.5,212.6 406.3,212.5 405.1,212.8 403.9,212.9 402.7,212.8 401.5,212.7 400.3,212.7 399.1,212.7 397.9,212.6 396.7,212.3 395.5,212.8 394.3,212.2 393.1,212.7 391.9,212.4 390.7,212.6 389.5,212.7 388.3,212.5 387.1,213.0 385.9,212.3 384.7,212.1 383.5,213.0 382.3,212.4 381.1,212.4 379.9,212.5 378.7,212.6 377.5,213.0 376.3,212.7 375.1,212.4 373.9,212.6 372.7,212.5 371.5,212.6 370.3,212.5 369.1,212.3 367.9,212.5 366.7,212.5 365.5,212.3 364.3,212.8 363.1,212.4 361.9,212.2 360.7,212.6 359.5,212.9 358.3,212.8 357.1,212.7 355.9,212.8 354.7,212.4 353.5,212.2 352.3,212.3 351.1,212.4 349.9,212.4 348.7,212.5 347.5,212.2 346.3,212.2 345.1,212.3 343.9,212.3 342.7,212.8 341.5,212.6 340.3,212.3 339.1,212.5 337.9,212.9 336.7,212.6 335.5,212.6 334.3,212.5 333.1,212.3 331.9,212.7 330.7,212.2 329.5,212.8 328.3,212.2 327.1,212.8 325.9,212.4 324.7,212.7 323.5,212.6" fill="url(#gM)" />
</g>
<g clip-path="url(#c1)">
<rect x="529" y="143.5" width="43" height="86.8" fill="#14251f" opacity="0.75"/>
<rect x="580" y="143.5" width="67" height="86.8" fill="#14251f" opacity="0.75"/>
<rect x="739" y="143.5" width="56" height="86.8" fill="#14251f" opacity="0.75"/>
<path d="M573.5 228 Q576 231 580 231" stroke="#b0106a" stroke-width="1" fill="none" />
<line x1="509" y1="151" x2="945" y2="151" stroke="#7a7aa8" stroke-width="1" stroke-dasharray="1.2,1.8"/>
<path d="M509 143.5 L512.9 143.5 M514.7 232 L514.7 147.5 Q514.7 143.5 518.2 143.5 L521.4 143.5 M523.2 232 L523.2 147.5 Q523.2 143.5 526.7 143.5 L529.7 143.5 M531.5 232 L531.5 147.5 Q531.5 143.5 535.0 143.5 L538.3 143.5 M540.1 232 L540.1 147.5 Q540.1 143.5 543.6 143.5 L546.8 143.5 M548.6 232 L548.6 147.5 Q548.6 143.5 552.1 143.5 L555.2 143.5 M557.0 232 L557.0 147.5 Q557.0 143.5 560.5 143.5 L563.7 143.5 M565.5 232 L565.5 147.5 Q565.5 143.5 569.0 143.5 L571.9 143.5 M573.7 232 L573.7 147.5 Q573.7 143.5 577.2 143.5 L580.3 143.5 M582.1 232 L582.1 147.5 Q582.1 143.5 585.6 143.5 L588.9 143.5 M590.7 232 L590.7 147.5 Q590.7 143.5 594.2 143.5 L597.6 143.5 M599.4 232 L599.4 147.5 Q599.4 143.5 602.9 143.5 L606.4 143.5 M608.2 232 L608.2 147.5 Q608.2 143.5 611.7 143.5 L614.9 143.5 M616.7 232 L616.7 147.5 Q616.7 143.5 620.2 143.5 L637.1 143.5 M638.9 232 L638.9 147.5 Q638.9 143.5 642.4 143.5 L645.7 143.5 M647.5 232 L647.5 147.5 Q647.5 143.5 651.0 143.5 L654.8 143.5 M656.6 232 L656.6 147.5 Q656.6 143.5 660.1 143.5 L666.8 143.5 M668.6 232 L668.6 147.5 Q668.6 143.5 672.1 143.5 L675.8 143.5 M677.6 232 L677.6 147.5 Q677.6 143.5 681.1 143.5 L683.7 143.5 M685.5 232 L685.5 147.5 Q685.5 143.5 689.0 143.5 L692.9 143.5 M694.7 232 L694.7 147.5 Q694.7 143.5 698.2 143.5 L704.9 143.5 M706.7 232 L706.7 147.5 Q706.7 143.5 710.2 143.5 L713.3 143.5 M715.1 232 L715.1 147.5 Q715.1 143.5 718.6 143.5 L721.4 143.5 M723.2 232 L723.2 147.5 Q723.2 143.5 726.7 143.5 L730.7 143.5 M732.5 232 L732.5 147.5 Q732.5 143.5 736.0 143.5 L738.2 143.5 M740.0 232 L740.0 147.5 Q740.0 143.5 743.5 143.5 L746.8 143.5 M748.6 232 L748.6 147.5 Q748.6 143.5 752.1 143.5 L760.2 143.5 M762.0 232 L762.0 147.5 Q762.0 143.5 765.5 143.5 L768.8 143.5 M770.6 232 L770.6 147.5 Q770.6 143.5 774.1 143.5 L784.8 143.5 M786.6 232 L786.6 147.5 Q786.6 143.5 790.1 143.5 L793.5 143.5 M795.3 232 L795.3 147.5 Q795.3 143.5 798.8 143.5 L805.8 143.5 M807.6 232 L807.6 147.5 Q807.6 143.5 811.1 143.5 L813.2 143.5 M815.0 232 L815.0 147.5 Q815.0 143.5 818.5 143.5 L889.7 143.5 M891.5 232 L891.5 147.5 Q891.5 143.5 895.0 143.5 L899.5 143.5 M901.3 232 L901.3 147.5 Q901.3 143.5 904.8 143.5 L945 143.5" stroke="#a8106a" stroke-width="1.1" fill="none" />
<rect x="512.5" y="141.5" width="1.6" height="90.5" fill="#9ccff0" />
<rect x="512.5" y="141.5" width="1.6" height="6" fill="#20d0f0" />
<rect x="512.3000000000001" y="228" width="2" height="4" fill="#707070" />
<rect x="521.0" y="141.5" width="1.6" height="90.5" fill="#9ccff0" />
<rect x="521.0" y="141.5" width="1.6" height="6" fill="#20d0f0" />
<rect x="520.8000000000001" y="228" width="2" height="4" fill="#707070" />
<rect x="529.3" y="141.5" width="1.6" height="90.5" fill="#9ccff0" />
<rect x="529.3" y="141.5" width="1.6" height="6" fill="#20d0f0" />
<rect x="529.1" y="228" width="2" height="4" fill="#707070" />
<rect x="537.9" y="141.5" width="1.6" height="90.5" fill="#9ccff0" />
<rect x="537.9" y="141.5" width="1.6" height="6" fill="#20d0f0" />
<rect x="537.7" y="228" width="2" height="4" fill="#707070" />
<rect x="546.4" y="141.5" width="1.6" height="90.5" fill="#9ccff0" />
<rect x="546.4" y="141.5" width="1.6" height="6" fill="#20d0f0" />
<rect x="546.2" y="228" width="2" height="4" fill="#707070" />
<rect x="554.8" y="141.5" width="1.6" height="90.5" fill="#9ccff0" />
<rect x="554.8" y="141.5" width="1.6" height="6" fill="#20d0f0" />
<rect x="554.6" y="228" width="2" height="4" fill="#707070" />
<rect x="563.3" y="141.5" width="1.6" height="90.5" fill="#9ccff0" />
<rect x="563.3" y="141.5" width="1.6" height="6" fill="#20d0f0" />
<rect x="563.1" y="228" width="2" height="4" fill="#707070" />
<rect x="571.5" y="141.5" width="1.6" height="90.5" fill="#9ccff0" />
<rect x="571.5" y="141.5" width="1.6" height="6" fill="#20d0f0" />
<rect x="571.3000000000001" y="228" width="2" height="4" fill="#707070" />
<rect x="579.9" y="141.5" width="1.6" height="90.5" fill="#9ccff0" />
<rect x="579.9" y="141.5" width="1.6" height="6" fill="#20d0f0" />
<rect x="579.7" y="228" width="2" height="4" fill="#707070" />
<rect x="588.5" y="141.5" width="1.6" height="90.5" fill="#9ccff0" />
<rect x="588.5" y="141.5" width="1.6" height="6" fill="#20d0f0" />
<rect x="588.3000000000001" y="228" width="2" height="4" fill="#707070" />
<rect x="597.1999999999999" y="141.5" width="1.6" height="90.5" fill="#9ccff0" />
<rect x="597.1999999999999" y="141.5" width="1.6" height="6" fill="#20d0f0" />
<rect x="597.0" y="228" width="2" height="4" fill="#707070" />
<rect x="606.0" y="141.5" width="1.6" height="90.5" fill="#9ccff0" />
<rect x="606.0" y="141.5" width="1.6" height="6" fill="#20d0f0" />
<rect x="605.8000000000001" y="228" width="2" height="4" fill="#707070" />
<rect x="614.5" y="141.5" width="1.6" height="90.5" fill="#9ccff0" />
<rect x="614.5" y="141.5" width="1.6" height="6" fill="#20d0f0" />
<rect x="614.3000000000001" y="228" width="2" height="4" fill="#707070" />
<rect x="636.6999999999999" y="141.5" width="1.6" height="90.5" fill="#9ccff0" />
<rect x="636.6999999999999" y="141.5" width="1.6" height="6" fill="#20d0f0" />
<rect x="636.5" y="228" width="2" height="4" fill="#707070" />
<rect x="645.3" y="141.5" width="1.6" height="90.5" fill="#9ccff0" />
<rect x="645.3" y="141.5" width="1.6" height="6" fill="#20d0f0" />
<rect x="645.1" y="228" width="2" height="4" fill="#707070" />
<rect x="654.4" y="141.5" width="1.6" height="90.5" fill="#9ccff0" />
<rect x="654.4" y="141.5" width="1.6" height="6" fill="#20d0f0" />
<rect x="654.2" y="228" width="2" height="4" fill="#707070" />
<rect x="666.4" y="141.5" width="1.6" height="90.5" fill="#9ccff0" />
<rect x="666.4" y="141.5" width="1.6" height="6" fill="#20d0f0" />
<rect x="666.2" y="228" width="2" height="4" fill="#707070" />
<rect x="675.4" y="141.5" width="1.6" height="90.5" fill="#9ccff0" />
<rect x="675.4" y="141.5" width="1.6" height="6" fill="#20d0f0" />
<rect x="675.2" y="228" width="2" height="4" fill="#707070" />
<rect x="683.3" y="141.5" width="1.6" height="90.5" fill="#9ccff0" />
<rect x="683.3" y="141.5" width="1.6" height="6" fill="#20d0f0" />
<rect x="683.1" y="228" width="2" height="4" fill="#707070" />
<rect x="692.5" y="141.5" width="1.6" height="90.5" fill="#9ccff0" />
<rect x="692.5" y="141.5" width="1.6" height="6" fill="#20d0f0" />
<rect x="692.3000000000001" y="228" width="2" height="4" fill="#707070" />
<rect x="704.5" y="141.5" width="1.6" height="90.5" fill="#9ccff0" />
<rect x="704.5" y="141.5" width="1.6" height="6" fill="#20d0f0" />
<rect x="704.3000000000001" y="228" width="2" height="4" fill="#707070" />
<rect x="712.9" y="141.5" width="1.6" height="90.5" fill="#9ccff0" />
<rect x="712.9" y="141.5" width="1.6" height="6" fill="#20d0f0" />
<rect x="712.7" y="228" width="2" height="4" fill="#707070" />
<rect x="721.0" y="141.5" width="1.6" height="90.5" fill="#9ccff0" />
<rect x="721.0" y="141.5" width="1.6" height="6" fill="#20d0f0" />
<rect x="720.8000000000001" y="228" width="2" height="4" fill="#707070" />
<rect x="730.3" y="141.5" width="1.6" height="90.5" fill="#9ccff0" />
<rect x="730.3" y="141.5" width="1.6" height="6" fill="#20d0f0" />
<rect x="730.1" y="228" width="2" height="4" fill="#707070" />
<rect x="737.8" y="141.5" width="1.6" height="90.5" fill="#9ccff0" />
<rect x="737.8" y="141.5" width="1.6" height="6" fill="#20d0f0" />
<rect x="737.6" y="228" width="2" height="4" fill="#707070" />
<rect x="746.4" y="141.5" width="1.6" height="90.5" fill="#9ccff0" />
<rect x="746.4" y="141.5" width="1.6" height="6" fill="#20d0f0" />
<rect x="746.2" y="228" width="2" height="4" fill="#707070" />
<rect x="759.8" y="141.5" width="1.6" height="90.5" fill="#9ccff0" />
<rect x="759.8" y="141.5" width="1.6" height="6" fill="#20d0f0" />
<rect x="759.6" y="228" width="2" height="4" fill="#707070" />
<rect x="768.4" y="141.5" width="1.6" height="90.5" fill="#9ccff0" />
<rect x="768.4" y="141.5" width="1.6" height="6" fill="#20d0f0" />
<rect x="768.2" y="228" width="2" height="4" fill="#707070" />
<rect x="784.4" y="141.5" width="1.6" height="90.5" fill="#9ccff0" />
<rect x="784.4" y="141.5" width="1.6" height="6" fill="#20d0f0" />
<rect x="784.2" y="228" width="2" height="4" fill="#707070" />
<rect x="793.1" y="141.5" width="1.6" height="90.5" fill="#9ccff0" />
<rect x="793.1" y="141.5" width="1.6" height="6" fill="#20d0f0" />
<rect x="792.9000000000001" y="228" width="2" height="4" fill="#707070" />
<rect x="805.4" y="141.5" width="1.6" height="90.5" fill="#9ccff0" />
<rect x="805.4" y="141.5" width="1.6" height="6" fill="#20d0f0" />
<rect x="805.2" y="228" width="2" height="4" fill="#707070" />
<rect x="812.8" y="141.5" width="1.6" height="90.5" fill="#9ccff0" />
<rect x="812.8" y="141.5" width="1.6" height="6" fill="#20d0f0" />
<rect x="812.6" y="228" width="2" height="4" fill="#707070" />
<rect x="889.3" y="141.5" width="1.6" height="90.5" fill="#9ccff0" />
<rect x="889.3" y="141.5" width="1.6" height="6" fill="#20d0f0" />
<rect x="889.1" y="228" width="2" height="4" fill="#707070" />
<rect x="899.1" y="141.5" width="1.6" height="90.5" fill="#9ccff0" />
<rect x="899.1" y="141.5" width="1.6" height="6" fill="#20d0f0" />
<rect x="898.9000000000001" y="228" width="2" height="4" fill="#707070" />
<text x="0" y="0" font-size="6.8" fill="#f4f4f4" transform="translate(514.6,182) rotate(-63)">Request</text>
<text x="0" y="0" font-size="6.8" fill="#f4f4f4" transform="translate(523.1,182) rotate(-63)">Request</text>
<text x="0" y="0" font-size="6.8" fill="#f4f4f4" transform="translate(531.4,182) rotate(-63)">Request</text>
<text x="0" y="0" font-size="6.8" fill="#f4f4f4" transform="translate(540.0,182) rotate(-63)">Request</text>
<text x="0" y="0" font-size="6.8" fill="#f4f4f4" transform="translate(548.5,182) rotate(-63)">Request</text>
<text x="0" y="0" font-size="6.8" fill="#f4f4f4" transform="translate(556.9,182) rotate(-63)">Request</text>
<text x="0" y="0" font-size="6.8" fill="#f4f4f4" transform="translate(565.4,182) rotate(-63)">Request</text>
<text x="0" y="0" font-size="6.8" fill="#f4f4f4" transform="translate(573.6,182) rotate(-63)">Request</text>
<text x="0" y="0" font-size="6.8" fill="#f4f4f4" transform="translate(582.0,182) rotate(-63)">Request</text>
<text x="0" y="0" font-size="6.8" fill="#f4f4f4" transform="translate(590.6,182) rotate(-63)">Request</text>
<text x="0" y="0" font-size="6.8" fill="#f4f4f4" transform="translate(599.3,182) rotate(-63)">Request</text>
<text x="0" y="0" font-size="6.8" fill="#f4f4f4" transform="translate(608.1,182) rotate(-63)">Request</text>
<text x="0" y="0" font-size="6.8" fill="#f4f4f4" transform="translate(616.6,182) rotate(-63)">Request</text>
<text x="0" y="0" font-size="6.8" fill="#f4f4f4" transform="translate(638.8,182) rotate(-63)">Request</text>
<text x="0" y="0" font-size="6.8" fill="#f4f4f4" transform="translate(647.4,182) rotate(-63)">Request</text>
<text x="0" y="0" font-size="6.8" fill="#f4f4f4" transform="translate(656.5,182) rotate(-63)">Request</text>
<text x="0" y="0" font-size="6.8" fill="#f4f4f4" transform="translate(668.5,182) rotate(-63)">Request</text>
<text x="0" y="0" font-size="6.8" fill="#f4f4f4" transform="translate(677.5,182) rotate(-63)">Request</text>
<text x="0" y="0" font-size="6.8" fill="#f4f4f4" transform="translate(685.4,182) rotate(-63)">Request</text>
<text x="0" y="0" font-size="6.8" fill="#f4f4f4" transform="translate(694.6,182) rotate(-63)">Request</text>
<text x="0" y="0" font-size="6.8" fill="#f4f4f4" transform="translate(706.6,182) rotate(-63)">Request</text>
<text x="0" y="0" font-size="6.8" fill="#f4f4f4" transform="translate(715.0,182) rotate(-63)">Request</text>
<text x="0" y="0" font-size="6.8" fill="#f4f4f4" transform="translate(723.1,182) rotate(-63)">Request</text>
<text x="0" y="0" font-size="6.8" fill="#f4f4f4" transform="translate(732.4,182) rotate(-63)">Request</text>
<text x="0" y="0" font-size="6.8" fill="#f4f4f4" transform="translate(739.9,182) rotate(-63)">Request</text>
<text x="0" y="0" font-size="6.8" fill="#f4f4f4" transform="translate(748.5,182) rotate(-63)">Request</text>
<text x="0" y="0" font-size="6.8" fill="#f4f4f4" transform="translate(761.9,182) rotate(-63)">Request</text>
<text x="0" y="0" font-size="6.8" fill="#f4f4f4" transform="translate(770.5,182) rotate(-63)">Request</text>
<text x="0" y="0" font-size="6.8" fill="#f4f4f4" transform="translate(786.5,182) rotate(-63)">Request</text>
<text x="0" y="0" font-size="6.8" fill="#f4f4f4" transform="translate(795.2,182) rotate(-63)">Request</text>
<text x="0" y="0" font-size="6.8" fill="#f4f4f4" transform="translate(807.5,182) rotate(-63)">Request</text>
<text x="0" y="0" font-size="6.8" fill="#f4f4f4" transform="translate(814.9,182) rotate(-63)">Request</text>
<text x="0" y="0" font-size="6.8" fill="#f4f4f4" transform="translate(891.4,182) rotate(-63)">Request</text>
<text x="0" y="0" font-size="6.8" fill="#f4f4f4" transform="translate(901.2,182) rotate(-63)">Request</text>
<text x="624" y="148" font-size="5.5" fill="#e8e8e8" text-anchor="middle"   >Idle</text>
<text x="777" y="148" font-size="5.5" fill="#e8e8e8" text-anchor="middle"   >Idle</text>
<rect x="509" y="143" width="15" height="6.5" fill="#c010c0" opacity="0.8"/>
<rect x="509" y="149.5" width="23" height="7" fill="#c010c0" opacity="0.8"/>
<text x="510" y="148.5" font-size="5.2" fill="#f0f0f0" text-anchor="start"   >P-AUX</text>
<text x="513" y="155.5" font-size="5.2" fill="#f0f0f0" text-anchor="start"   >1000000</text>
<rect x="502" y="224.7" width="7" height="7" fill="#e8108a" rx="0.8"/>
<text x="505.5" y="230" font-size="4.6" fill="#000" text-anchor="middle"   >Z2</text>
<path d="M506.8 247.8 L511.2 247.8 L509 244.8 Z" fill="#e8108a"/>
<rect x="33" y="266" width="189" height="84" fill="#14251f" opacity="0.75"/>
<line x1="33" y1="266" x2="469" y2="266" stroke="#18c818" stroke-width="1.6"/>
<rect x="76" y="264.8" width="4.599999999999994" height="38.7" fill="#22c6f2" />
<rect x="76" y="303.5" width="4.599999999999994" height="46.5" fill="#a6d0f6" />
<rect x="76" y="350" width="4.599999999999994" height="3" fill="#858585" />
<rect x="96.2" y="264.8" width="71.89999999999999" height="38.7" fill="#22c6f2" />
<rect x="96.2" y="303.5" width="71.89999999999999" height="46.5" fill="#a6d0f6" />
<rect x="96.2" y="350" width="71.89999999999999" height="3" fill="#858585" />
<rect x="191.3" y="264.8" width="2.0" height="38.7" fill="#22c6f2" />
<rect x="191.3" y="303.5" width="2.0" height="46.5" fill="#a6d0f6" />
<rect x="191.3" y="350" width="2.0" height="3" fill="#858585" />
<rect x="204.5" y="264.8" width="17.30000000000001" height="38.7" fill="#22c6f2" />
<rect x="204.5" y="303.5" width="17.30000000000001" height="46.5" fill="#a6d0f6" />
<rect x="204.5" y="350" width="17.30000000000001" height="3" fill="#858585" />
<rect x="231.8" y="264.8" width="2.0" height="38.7" fill="#22c6f2" />
<rect x="231.8" y="303.5" width="2.0" height="46.5" fill="#a6d0f6" />
<rect x="231.8" y="350" width="2.0" height="3" fill="#858585" />
<rect x="280.4" y="264.8" width="3.8000000000000114" height="38.7" fill="#22c6f2" />
<rect x="280.4" y="303.5" width="3.8000000000000114" height="46.5" fill="#a6d0f6" />
<rect x="280.4" y="350" width="3.8000000000000114" height="3" fill="#858585" />
<rect x="140.60311864227913" y="264.8" width="0.8" height="85" fill="#30c060" opacity="0.75"/>
<rect x="148.92508924825106" y="264.8" width="0.8" height="85" fill="#30c060" opacity="0.75"/>
<rect x="152.66354958959877" y="264.8" width="0.8" height="85" fill="#30c060" opacity="0.75"/>
<rect x="162.97151986439354" y="264.8" width="0.8" height="85" fill="#30c060" opacity="0.75"/>
<rect x="148.79290023179516" y="264.8" width="0.8" height="85" fill="#30c060" opacity="0.75"/>
<rect x="161.5627497665792" y="264.8" width="0.8" height="85" fill="#30c060" opacity="0.75"/>
<rect x="99.03036597985303" y="264.8" width="0.8" height="85" fill="#30c060" opacity="0.75"/>
<rect x="129.5935858064674" y="264.8" width="0.8" height="85" fill="#30c060" opacity="0.75"/>
<rect x="163.03497018988196" y="264.8" width="0.8" height="85" fill="#30c060" opacity="0.75"/>
<rect x="142.4282187195847" y="264.8" width="0.8" height="85" fill="#30c060" opacity="0.75"/>
<rect x="160.06303442254358" y="264.8" width="0.8" height="85" fill="#30c060" opacity="0.75"/>
<rect x="104.9244175257201" y="264.8" width="0.8" height="85" fill="#30c060" opacity="0.75"/>
<rect x="129.83483334475147" y="264.8" width="0.8" height="85" fill="#30c060" opacity="0.75"/>
<rect x="114.26009828338812" y="264.8" width="0.8" height="85" fill="#30c060" opacity="0.75"/>
<rect x="135.06326014651512" y="264.8" width="0.8" height="85" fill="#30c060" opacity="0.75"/>
<rect x="137.17588315496704" y="264.8" width="0.8" height="85" fill="#30c060" opacity="0.75"/>
<rect x="205.20982703342244" y="264.8" width="0.8" height="85" fill="#30c060" opacity="0.75"/>
<rect x="208.46767680742158" y="264.8" width="0.8" height="85" fill="#30c060" opacity="0.75"/>
<rect x="209.47171785617778" y="264.8" width="0.8" height="85" fill="#30c060" opacity="0.75"/>
<rect x="219.66152594893683" y="264.8" width="0.8" height="85" fill="#30c060" opacity="0.75"/>
<rect x="220.5" y="264.8" width="1.3" height="87" fill="#30c040" />
<rect x="150.60078161403993" y="303.5" width="0.8" height="46.5" fill="#8aa0b8" opacity="0.5"/>
<rect x="108.17229486506268" y="303.5" width="0.8" height="46.5" fill="#8aa0b8" opacity="0.5"/>
<rect x="152.8002894001843" y="303.5" width="0.8" height="46.5" fill="#8aa0b8" opacity="0.5"/>
<rect x="106.71371928792323" y="303.5" width="0.8" height="46.5" fill="#8aa0b8" opacity="0.5"/>
<rect x="140.22167643262816" y="303.5" width="0.8" height="46.5" fill="#8aa0b8" opacity="0.5"/>
<rect x="105.86894627851888" y="303.5" width="0.8" height="46.5" fill="#8aa0b8" opacity="0.5"/>
<rect x="97.12424035417743" y="303.5" width="0.8" height="46.5" fill="#8aa0b8" opacity="0.5"/>
<rect x="157.99833213069974" y="303.5" width="0.8" height="46.5" fill="#8aa0b8" opacity="0.5"/>
<rect x="111.66194677465825" y="303.5" width="0.8" height="46.5" fill="#8aa0b8" opacity="0.5"/>
<rect x="112.08368184573126" y="303.5" width="0.8" height="46.5" fill="#8aa0b8" opacity="0.5"/>
<rect x="307.7" y="265.5" width="18.2" height="87" fill="#f2c6ea" />
<rect x="307.7" y="265.5" width="2.2" height="87" fill="#58c8e8" />
<rect x="318" y="265.5" width="3" height="87" fill="#f8a8d8" opacity="0.6"/>
<rect x="329.2" y="265.5" width="1" height="87" fill="#c070c0" />
<rect x="309" y="264.5" width="12" height="2" fill="#40c8f0" />
<rect x="322" y="264.5" width="8" height="2" fill="#e0208a" />
<rect x="307.7" y="350" width="18.2" height="2.8" fill="#707070" />
<line x1="33" y1="274" x2="469" y2="274" stroke="#5050b8" stroke-width="1" stroke-dasharray="1.2,1.8"/>
<text x="0" y="0" font-size="7" font-weight="bold" fill="#fafafa" transform="translate(79.5,303.5) rotate(-62)">Request</text>
<text x="0" y="0" font-size="7" font-weight="bold" fill="#fafafa" transform="translate(80.7,303.5) rotate(-62)">Request</text>
<text x="0" y="0" font-size="7" font-weight="bold" fill="#fafafa" transform="translate(81.9,303.5) rotate(-62)">Request</text>
<polygon points="95.6,303.6 103.7,278.2 179.0,278.2 171.0,303.6" fill="#fbfbfb" />
<text x="0" y="0" font-size="7" font-weight="bold" fill="#fafafa" transform="translate(193.5,303.5) rotate(-62)">Request</text>
<text x="0" y="0" font-size="7" font-weight="bold" fill="#fafafa" transform="translate(194.7,303.5) rotate(-62)">Request</text>
<text x="0" y="0" font-size="7" font-weight="bold" fill="#fafafa" transform="translate(195.9,303.5) rotate(-62)">Request</text>
<polygon points="204.5,303.6 212.6,278.2 232.3,278.2 223.0,303.6" fill="#fbfbfb" />
<text x="0" y="0" font-size="7" font-weight="bold" fill="#fafafa" transform="translate(233.5,303.5) rotate(-62)">Request</text>
<text x="0" y="0" font-size="7" font-weight="bold" fill="#fafafa" transform="translate(234.7,303.5) rotate(-62)">Request</text>
<text x="0" y="0" font-size="7" font-weight="bold" fill="#fafafa" transform="translate(235.9,303.5) rotate(-62)">Request</text>
<text x="0" y="0" font-size="7" font-weight="bold" fill="#fafafa" transform="translate(283.0,303.5) rotate(-62)">Request</text>
<text x="0" y="0" font-size="7" font-weight="bold" fill="#fafafa" transform="translate(284.2,303.5) rotate(-62)">Request</text>
<text x="0" y="0" font-size="7" font-weight="bold" fill="#fafafa" transform="translate(285.4,303.5) rotate(-62)">Request</text>
<polygon points="307.0,303.6 313.3,278.2 338.0,278.2 331.0,303.6" fill="#fbfbfb" />
<text x="0" y="0" font-size="7" font-weight="bold" fill="#fafafa" transform="translate(331.5,303.5) rotate(-62)">Request</text>
<text x="0" y="0" font-size="7" font-weight="bold" fill="#fafafa" transform="translate(332.7,303.5) rotate(-62)">Request</text>
<text x="0" y="0" font-size="7" font-weight="bold" fill="#fafafa" transform="translate(333.9,303.5) rotate(-62)">Request</text>
<text x="50" y="270" font-size="5.5" fill="#e0e0e0" text-anchor="start"   >Idle</text>
<text x="84.5" y="270" font-size="5.5" fill="#e0e0e0" text-anchor="start"   >Idle</text>
<text x="175" y="270" font-size="5.5" fill="#e0e0e0" text-anchor="start"   >Idle</text>
<rect x="33" y="267" width="14.5" height="7" fill="#c010c0" opacity="0.8"/>
<rect x="33" y="274" width="22" height="7" fill="#c010c0" opacity="0.8"/>
<text x="34" y="272.6" font-size="5.4" fill="#f0f0f0" text-anchor="start"   >P-AUX</text>
<text x="36.5" y="279.8" font-size="5.4" fill="#f0f0f0" text-anchor="start"   >1000000</text>
<rect x="25" y="261" width="8" height="6" fill="#10e010" rx="0.8"/>
<text x="29" y="266" font-size="4.6" fill="#000" text-anchor="middle"   >C4</text>
<path d="M74.8 367.8 L79.2 367.8 L77 364.8 Z" fill="#18d818"/>
<text x="471" y="302" font-size="5" fill="#18c818" text-anchor="start"   >◁</text>
<rect x="509" y="274.5" width="53" height="60" fill="#14251f" opacity="0.75"/>
<rect x="562" y="267" width="349.6" height="71.4" fill="#484848" stroke="#787878" stroke-width="1"/>
<text x="737" y="273" font-size="5.5" fill="#e8e8e8" text-anchor="middle"   >Unknown</text>
<rect x="562" y="274.5" width="56.5" height="60" fill="#3b6866" stroke="#40c0c0" stroke-width="0.9"/>
<text x="590" y="280.5" font-size="5.5" fill="#e8e8e8" text-anchor="middle"   >Preamble</text>
<rect x="618.5" y="274.5" width="7.5" height="60" fill="#2e3434" stroke="#6a8a8a" stroke-width="0.6"/>
<rect x="626" y="274.5" width="8.6" height="60" fill="#2e3434" stroke="#8a8aa8" stroke-width="0.6"/>
<rect x="634.6" y="274.5" width="42.4" height="60" fill="#3a3a8a" stroke="#7a7ab8" stroke-width="0.8"/>
<rect x="677.0" y="274.5" width="17" height="60" fill="#3a3a3a" stroke="#40c0c0" stroke-width="0.9"/>
<text x="685.5" y="280.5" font-size="5.3" fill="#e8e8e8" text-anchor="middle"   >0x04</text>
<rect x="694.0" y="274.5" width="17" height="60" fill="#3a3a3a" stroke="#40c0c0" stroke-width="0.9"/>
<text x="702.55" y="280.5" font-size="5.3" fill="#e8e8e8" text-anchor="middle"   >0x21</text>
<rect x="711.1" y="274.5" width="17" height="60" fill="#3a3a3a" stroke="#40c0c0" stroke-width="0.9"/>
<text x="719.6" y="280.5" font-size="5.3" fill="#e8e8e8" text-anchor="middle"   >0x00</text>
<rect x="728.1" y="274.5" width="17" height="60" fill="#3a3a3a" stroke="#40c0c0" stroke-width="0.9"/>
<text x="736.65" y="280.5" font-size="5.3" fill="#e8e8e8" text-anchor="middle"   >0x00</text>
<rect x="745.2" y="274.5" width="17" height="60" fill="#3a3a3a" stroke="#40c0c0" stroke-width="0.9"/>
<text x="753.7" y="280.5" font-size="5.3" fill="#e8e8e8" text-anchor="middle"   >0x00</text>
<rect x="762.2" y="274.5" width="17" height="60" fill="#3a3a3a" stroke="#40c0c0" stroke-width="0.9"/>
<text x="770.75" y="280.5" font-size="5.3" fill="#e8e8e8" text-anchor="middle"   >0x00</text>
<rect x="779.3" y="274.5" width="4.5" height="60" fill="#3a3a3a" stroke="#40c0c0" stroke-width="0.8"/>
<rect x="783.8" y="274.5" width="127.8" height="60" fill="#3d6866" stroke="#40c0c0" stroke-width="0.9"/>
<text x="847" y="280.5" font-size="5.5" fill="#e8e8e8" text-anchor="middle"   >Stop</text>
<text x="535.5" y="280.5" font-size="5.5" fill="#e8e8e8" text-anchor="middle"   >Idle</text>
<line x1="509" y1="300" x2="945" y2="300" stroke="#8a8ab0" stroke-width="0.8" stroke-dasharray="1.2,1.8"/>
<rect x="563" y="293" width="55" height="34" fill="#40dede" opacity="0.3"/>
<path d="M563.0 308 L563.0 327 M564.6 293.1 L564.6 327 M567.0 293.1 L567.0 327 M569.4 293 L569.4 300 M569.4 308 L569.4 327 M571.6 293 L571.6 300 M571.6 308 L571.6 327 M573.1 294.0 L573.1 327 M574.6 293 L574.6 300 M574.6 308 L574.6 327 M577.2 293.7 L577.2 327 M579.4 293.1 L579.4 327 M582.4 308 L582.4 327 M584.0 293 L584.0 300 M584.0 308 L584.0 327 M586.0 293.2 L586.0 327 M588.5 293.4 L588.5 327 M590.9 293 L590.9 300 M590.9 308 L590.9 327 M592.4 293 L592.4 300 M592.4 308 L592.4 327 M595.1 293.4 L595.1 327 M597.6 293.4 L597.6 327 M600.5 293.3 L600.5 327 M603.0 294.1 L603.0 327 M605.9 308 L605.9 327 M609.2 293 L609.2 300 M609.2 308 L609.2 327 M611.4 293.2 L611.4 327 M613.7 293 L613.7 300 M613.7 308 L613.7 327 M616.4 293.7 L616.4 327 " stroke="#40dede" stroke-width="0.9" fill="none" />
<rect x="563" y="326.1" width="55" height="1.2" fill="#40dede" />
<rect x="627" y="293" width="152" height="34" fill="#40dede" opacity="0.3"/>
<path d="M627.0 308 L627.0 327 M629.7 293.7 L629.7 327 M632.0 294.1 L632.0 327 M634.3 293.1 L634.3 327 M637.0 294.2 L637.0 327 M640.0 308 L640.0 327 M642.2 293.0 L642.2 327 M644.4 293 L644.4 300 M644.4 308 L644.4 327 M646.0 293 L646.0 300 M646.0 308 L646.0 327 M648.9 293 L648.9 300 M648.9 308 L648.9 327 M650.7 294.0 L650.7 327 M652.1 293.7 L652.1 327 M655.3 294.0 L655.3 327 M657.2 293.4 L657.2 327 M660.3 293.2 L660.3 327 M662.0 293 L662.0 300 M662.0 308 L662.0 327 M663.7 293.7 L663.7 327 M665.6 293 L665.6 300 M665.6 308 L665.6 327 M667.8 293.7 L667.8 327 M671.0 293.6 L671.0 327 M673.6 293.1 L673.6 327 M676.8 294.0 L676.8 327 M679.8 293.5 L679.8 327 M681.3 293.1 L681.3 327 M682.7 293 L682.7 300 M682.7 308 L682.7 327 M684.4 293.1 L684.4 327 M685.7 293 L685.7 300 M685.7 308 L685.7 327 M687.2 293.0 L687.2 327 M690.3 293.2 L690.3 327 M692.1 293.4 L692.1 327 M693.7 294.2 L693.7 327 M695.9 293.1 L695.9 327 M697.4 293.3 L697.4 327 M700.5 293 L700.5 300 M700.5 308 L700.5 327 M701.8 293.6 L701.8 327 M703.4 293.0 L703.4 327 M705.8 294.0 L705.8 327 M708.6 308 L708.6 327 M710.6 293 L710.6 300 M710.6 308 L710.6 327 M713.5 293.9 L713.5 327 M715.5 293 L715.5 300 M715.5 308 L715.5 327 M718.5 294.0 L718.5 327 M721.5 293.9 L721.5 327 M723.3 293.4 L723.3 327 M724.6 293 L724.6 300 M724.6 308 L724.6 327 M726.5 308 L726.5 327 M729.2 293.5 L729.2 327 M732.5 294.1 L732.5 327 M734.5 293 L734.5 300 M734.5 308 L734.5 327 M736.3 293 L736.3 300 M736.3 308 L736.3 327 M738.0 294.1 L738.0 327 M741.1 293.8 L741.1 327 M744.1 293 L744.1 300 M744.1 308 L744.1 327 M746.7 293.9 L746.7 327 M749.6 293.2 L749.6 327 M752.5 294.0 L752.5 327 M755.9 293.5 L755.9 327 M759.1 293.2 L759.1 327 M760.7 293 L760.7 300 M760.7 308 L760.7 327 M763.9 293.2 L763.9 327 M766.9 293.8 L766.9 327 M768.9 293.2 L768.9 327 M770.2 293.8 L770.2 327 M772.6 293.5 L772.6 327 M775.8 293.3 L775.8 327 M777.6 308 L777.6 327 " stroke="#40dede" stroke-width="0.9" fill="none" />
<rect x="627" y="326.1" width="152" height="1.2" fill="#40dede" />
<rect x="618.5" y="300" width="1" height="27" fill="#40dede" />
<rect x="619" y="326" width="6" height="1" fill="#40dede" />
<rect x="625" y="300" width="1" height="27" fill="#40dede" />
<rect x="782.5" y="300" width="1" height="27" fill="#40dede" />
<rect x="783" y="326.3" width="128" height="1.2" fill="#40dede" />
<rect x="912" y="295" width="33" height="32.5" fill="#40dede" opacity="0.3"/>
<path d="M912.0 295.3 L912.0 327.5 M914.0 295 L914.0 302 M914.0 310 L914.0 327.5 M916.7 295.5 L916.7 327.5 M919.0 295.5 L919.0 327.5 M921.7 295.6 L921.7 327.5 M923.9 295 L923.9 302 M923.9 310 L923.9 327.5 M925.9 295 L925.9 302 M925.9 310 L925.9 327.5 M927.2 295.2 L927.2 327.5 M929.2 295.7 L929.2 327.5 M931.1 295.7 L931.1 327.5 M933.6 295 L933.6 302 M933.6 310 L933.6 327.5 M935.8 295 L935.8 302 M935.8 310 L935.8 327.5 M937.5 295.6 L937.5 327.5 M939.7 296.1 L939.7 327.5 M941.8 295.6 L941.8 327.5 M943.9 295.5 L943.9 327.5 " stroke="#40dede" stroke-width="0.9" fill="none" />
<rect x="912" y="326.6" width="33" height="1.2" fill="#40dede" />
<rect x="709" y="316.5" width="36" height="5" fill="#20e0e0" rx="1"/>
<text x="727" y="320.6" font-size="4.6" fill="#fff" text-anchor="middle"   >551.0564 ms</text>
<rect x="509" y="289.5" width="12" height="6" fill="#c010c0" opacity="0.8"/>
<rect x="509" y="295.5" width="18" height="6.5" fill="#c010c0" opacity="0.8"/>
<text x="510" y="294.3" font-size="5.2" fill="#f0f0f0" text-anchor="start"   >P-AUX</text>
<text x="511" y="301.2" font-size="5.2" fill="#f0f0f0" text-anchor="start"   >1000000</text>
<rect x="501.7" y="262.5" width="7.5" height="5.2" fill="#20d0e0" rx="0.8"/>
<rect x="504.5" y="260" width="2" height="2.5" fill="#20d0e0" />
<path d="M506.8 367.8 L511.2 367.8 L509 364.8 Z" fill="#20d0e0"/>
</g>
<line x1="911.6" y1="262" x2="911.6" y2="356" stroke="#f0f0f0" stroke-width="1.1" stroke-dasharray="3.5,3"/>
<text x="911.6" y="360.5" font-size="5.5" fill="#d8d8d8" text-anchor="middle"   >Z3</text>
<path d="M907.1 318 L916.1 318 M911.6 313.5 L911.6 322.5" stroke="#505050" stroke-width="2.4"/>
<path d="M907.6 318 L915.6 318 M911.6 314 L911.6 322" stroke="#f8f8f8" stroke-width="1.1"/>
<line x1="637.3" y1="138" x2="637.3" y2="236" stroke="#f0f0f0" stroke-width="1.1" stroke-dasharray="3.5,3"/>
<text x="637.3" y="240.5" font-size="5.5" fill="#d8d8d8" text-anchor="middle"   >Z2</text>
<path d="M632.8 205 L641.8 205 M637.3 200.5 L637.3 209.5" stroke="#505050" stroke-width="2.4"/>
<path d="M633.3 205 L641.3 205 M637.3 201 L637.3 209" stroke="#f8f8f8" stroke-width="1.1"/>
<line x1="317.5" y1="18.5" x2="317.5" y2="114" stroke="#f0f0f0" stroke-width="1.1" stroke-dasharray="3.5,3"/>
<text x="317.5" y="118.5" font-size="5.5" fill="#d8d8d8" text-anchor="middle"   >C1</text>
<path d="M313.0 70.5 L322.0 70.5 M317.5 66.0 L317.5 75.0" stroke="#505050" stroke-width="2.4"/>
<path d="M313.5 70.5 L321.5 70.5 M317.5 66.5 L317.5 74.5" stroke="#f8f8f8" stroke-width="1.1"/>
<line x1="638.5" y1="18.5" x2="638.5" y2="114" stroke="#f0f0f0" stroke-width="1.1" stroke-dasharray="3.5,3"/>
<text x="638.5" y="118.5" font-size="5.5" fill="#d8d8d8" text-anchor="middle"   >Z1</text>
<path d="M634.0 74.5 L643.0 74.5 M638.5 70.0 L638.5 79.0" stroke="#505050" stroke-width="2.4"/>
<path d="M634.5 74.5 L642.5 74.5 M638.5 70.5 L638.5 78.5" stroke="#f8f8f8" stroke-width="1.1"/>
<line x1="317.3" y1="138" x2="317.3" y2="237" stroke="#f0f0f0" stroke-width="1.1" stroke-dasharray="3.5,3"/>
<text x="317.3" y="241.5" font-size="5.5" fill="#d8d8d8" text-anchor="middle"   >C2</text>
<path d="M312.8 187 L321.8 187 M317.3 182.5 L317.3 191.5" stroke="#505050" stroke-width="2.4"/>
<path d="M313.3 187 L321.3 187 M317.3 183 L317.3 191" stroke="#f8f8f8" stroke-width="1.1"/>
<line x1="317.3" y1="262" x2="317.3" y2="356" stroke="#f0f0f0" stroke-width="0.9"/>
<text x="317.3" y="360.5" font-size="5.5" fill="#d8d8d8" text-anchor="middle"   >C4</text>
<path d="M313.3 327 L321.3 327 M317.3 323 L317.3 331" stroke="#f8f8f8" stroke-width="1.3"/>
<rect x="25" y="63.5" width="8" height="5.5" fill="#e0e000" rx="0.8"/>
<text x="29" y="68.1" font-size="4.6" fill="#000" text-anchor="middle"   >C1</text>
<rect x="501" y="64.5" width="8" height="5.5" fill="#e0e000" rx="0.8"/>
<text x="505" y="69.1" font-size="4.6" fill="#000" text-anchor="middle"   >Z1</text>
<rect x="25" y="186" width="8" height="5.5" fill="#e8108a" rx="0.8"/>
<text x="29" y="190.6" font-size="4.6" fill="#000" text-anchor="middle"   >C2</text>
<path d="M74.8 125.5 L79.2 125.5 L77 122.5 Z" fill="#e8e800"/>
<path d="M74.8 250 L79.2 250 L77 247 Z" fill="#e8108a"/>
<path d="M506.3 124.5 L510.7 124.5 L508.5 121.5 Z" fill="#e8e800"/>
<rect x="0" y="379" width="933" height="1" fill="#2a2a2a" />
<text x="1" y="386.3" font-size="6.6" fill="#fff" text-anchor="start"  font-weight="bold" >Index</text>
<text x="41" y="386.3" font-size="6.6" fill="#fff" text-anchor="start"  font-weight="bold" >Time</text>
<text x="80" y="386.3" font-size="6.6" fill="#fff" text-anchor="start"  font-weight="bold" >Protocol</text>
<text x="120" y="386.3" font-size="6.6" fill="#fff" text-anchor="start"  font-weight="bold" >Message</text>
<text x="199" y="386.3" font-size="6.6" fill="#fff" text-anchor="start"  font-weight="bold" >Data</text>
<text x="831" y="386.3" font-size="6.6" fill="#fff" text-anchor="start"  font-weight="bold" >CRC</text>
<text x="870" y="386.3" font-size="6.6" fill="#fff" text-anchor="start"  font-weight="bold" >Status</text>
<path d="M75 383.5 L78 383.5 L76.5 385.5 Z" fill="#ccc"/>
<path d="M115 383.5 L118 383.5 L116.5 385.5 Z" fill="#ccc"/>
<path d="M929 383.5 L932 383.5 L930.5 385.5 Z" fill="#ccc"/>
<rect x="0" y="388" width="933" height="8" fill="#a80054" />
<rect x="79" y="388" width="40" height="8" fill="#00ee00" />
<rect x="0" y="395.5" width="933" height="0.6" fill="#7a003c" />
<path d="M3.5 390.2 L5.8 392 L3.5 393.8 Z" fill="#f0c0d8"/>
<text x="8" y="394.5" font-size="6.6" fill="#fff" text-anchor="start"   >270</text>
<text x="41" y="394.5" font-size="6.6" fill="#fff" text-anchor="start"   >546.507 ms</text>
<text x="80" y="394.5" font-size="6.6" fill="#000" text-anchor="start"   >DP-AUX</text>
<text x="120" y="394.5" font-size="6.6" fill="#fff" text-anchor="start"   >Request</text>
<text x="199" y="394.5" font-size="6.6" fill="#fff" text-anchor="start"   >0x01 0x6d 0xf2 0x18</text>
<rect x="0" y="396" width="933" height="8" fill="#a80054" />
<rect x="79" y="396" width="40" height="8" fill="#00ee00" />
<rect x="0" y="403.5" width="933" height="0.6" fill="#7a003c" />
<path d="M3.5 398.2 L5.8 400 L3.5 401.8 Z" fill="#f0c0d8"/>
<text x="8" y="402.5" font-size="6.6" fill="#fff" text-anchor="start"   >271</text>
<text x="41" y="402.5" font-size="6.6" fill="#fff" text-anchor="start"   >547.498 ms</text>
<text x="80" y="402.5" font-size="6.6" fill="#000" text-anchor="start"   >DP-AUX</text>
<text x="120" y="402.5" font-size="6.6" fill="#fff" text-anchor="start"   >Request</text>
<text x="199" y="402.5" font-size="6.6" fill="#fff" text-anchor="start"   >0x01 0x6c 0xf2 0x03</text>
<rect x="0" y="404" width="933" height="8" fill="#a80054" />
<rect x="79" y="404" width="40" height="8" fill="#00ee00" />
<rect x="0" y="411.5" width="933" height="0.6" fill="#7a003c" />
<path d="M3.5 406.2 L5.8 408 L3.5 409.8 Z" fill="#f0c0d8"/>
<text x="8" y="410.5" font-size="6.6" fill="#fff" text-anchor="start"   >272</text>
<text x="41" y="410.5" font-size="6.6" fill="#fff" text-anchor="start"   >548.488 ms</text>
<text x="80" y="410.5" font-size="6.6" fill="#000" text-anchor="start"   >DP-AUX</text>
<text x="120" y="410.5" font-size="6.6" fill="#fff" text-anchor="start"   >Request</text>
<text x="199" y="410.5" font-size="6.6" fill="#fff" text-anchor="start"   >0x01 0x03 0xf3 0x06</text>
<rect x="0" y="412" width="933" height="8" fill="#a80054" />
<rect x="79" y="412" width="40" height="8" fill="#00ee00" />
<rect x="0" y="419.5" width="933" height="0.6" fill="#7a003c" />
<path d="M3.5 414.2 L5.8 416 L3.5 417.8 Z" fill="#f0c0d8"/>
<text x="8" y="418.5" font-size="6.6" fill="#fff" text-anchor="start"   >273</text>
<text x="41" y="418.5" font-size="6.6" fill="#fff" text-anchor="start"   >550.987 ms</text>
<text x="80" y="418.5" font-size="6.6" fill="#000" text-anchor="start"   >DP-AUX</text>
<text x="120" y="418.5" font-size="6.6" fill="#fff" text-anchor="start"   >Request</text>
<text x="199" y="418.5" font-size="6.6" fill="#fff" text-anchor="start"   >0x21 0x00 0x00 0x00 0x00</text>
<rect x="79" y="420" width="40" height="8" fill="#00f0f0" />
<path d="M6 422 L6 426 L2 426 Z" fill="#e0e0e0"/>
<text x="8" y="426.5" font-size="6.6" fill="#fff" text-anchor="start"   >274</text>
<text x="41" y="426.5" font-size="6.6" fill="#fff" text-anchor="start"   >550.987 ms</text>
<text x="80" y="426.5" font-size="6.6" fill="#000" text-anchor="start"   >DP-AUX</text>
<text x="120" y="426.5" font-size="6.6" fill="#fff" text-anchor="start"   >Unknown</text>
<text x="199" y="426.5" font-size="6.6" fill="#fff" text-anchor="start"   >0x21 0x00 0x00 0x00 0x00</text>
<rect x="0" y="460" width="933" height="8" fill="#a80054" />
<rect x="79" y="460" width="40" height="8" fill="#00ee00" />
<rect x="0" y="467.5" width="933" height="0.6" fill="#7a003c" />
<path d="M3.5 462.2 L5.8 464 L3.5 465.8 Z" fill="#f0c0d8"/>
<text x="8" y="466.5" font-size="6.6" fill="#fff" text-anchor="start"   >275</text>
<text x="41" y="466.5" font-size="6.6" fill="#fff" text-anchor="start"   >551.990 ms</text>
<text x="80" y="466.5" font-size="6.6" fill="#000" text-anchor="start"   >DP-AUX</text>
<text x="120" y="466.5" font-size="6.6" fill="#fff" text-anchor="start"   >Request</text>
<text x="199" y="466.5" font-size="6.6" fill="#fff" text-anchor="start"   >0x01 0x55 0x63 0x6e</text>
<rect x="0" y="468" width="933" height="8" fill="#a80054" />
<rect x="79" y="468" width="40" height="8" fill="#00ee00" />
<rect x="0" y="475.5" width="933" height="0.6" fill="#7a003c" />
<path d="M3.5 470.2 L5.8 472 L3.5 473.8 Z" fill="#f0c0d8"/>
<text x="8" y="474.5" font-size="6.6" fill="#fff" text-anchor="start"   >276</text>
<text x="41" y="474.5" font-size="6.6" fill="#fff" text-anchor="start"   >553.037 ms</text>
<text x="80" y="474.5" font-size="6.6" fill="#000" text-anchor="start"   >DP-AUX</text>
<text x="120" y="474.5" font-size="6.6" fill="#fff" text-anchor="start"   >Request</text>
<rect x="0" y="476" width="933" height="8" fill="#a80054" />
<rect x="79" y="476" width="40" height="8" fill="#00ee00" />
<rect x="0" y="483.5" width="933" height="0.6" fill="#7a003c" />
<path d="M3.5 478.2 L5.8 480 L3.5 481.8 Z" fill="#f0c0d8"/>
<text x="8" y="482.5" font-size="6.6" fill="#fff" text-anchor="start"   >277</text>
<text x="41" y="482.5" font-size="6.6" fill="#fff" text-anchor="start"   >553.166 ms</text>
<text x="80" y="482.5" font-size="6.6" fill="#000" text-anchor="start"   >DP-AUX</text>
<text x="120" y="482.5" font-size="6.6" fill="#fff" text-anchor="start"   >Reply</text>
<text x="199" y="482.5" font-size="6.6" fill="#fff" text-anchor="start"   >0x00 0x00 0x80 0x02 0x11 0x11</text>
<rect x="39.5" y="380" width="0.8" height="104" fill="#262626" opacity="0.9"/>
<rect x="78.5" y="380" width="0.8" height="104" fill="#262626" opacity="0.9"/>
<rect x="118.5" y="380" width="0.8" height="104" fill="#262626" opacity="0.9"/>
<rect x="197.5" y="380" width="0.8" height="104" fill="#262626" opacity="0.9"/>
<rect x="829.5" y="380" width="0.8" height="104" fill="#262626" opacity="0.9"/>
<rect x="868.5" y="380" width="0.8" height="104" fill="#262626" opacity="0.9"/>
<rect x="79" y="428" width="854" height="24" fill="#2b2b2b" />
<rect x="79" y="435.7" width="854" height="0.6" fill="#242424" />
<rect x="79" y="443.7" width="854" height="0.6" fill="#242424" />
<rect x="127.6" y="428" width="0.8" height="24" fill="#222" />
<rect x="177.7" y="428" width="0.8" height="24" fill="#222" />
<rect x="227.6" y="428" width="0.8" height="24" fill="#222" />
<rect x="351" y="428" width="0.8" height="24" fill="#222" />
<rect x="39.5" y="428" width="0.8" height="32" fill="#262626" />
<text x="80.3" y="434.5" font-size="6.6" fill="#fff" text-anchor="start" textLength="33.66" lengthAdjust="spacingAndGlyphs" font-weight="bold" >PacketType</text>
<text x="130.2" y="434.5" font-size="6.6" fill="#fff" text-anchor="start" textLength="34.45" lengthAdjust="spacingAndGlyphs" font-weight="bold" >Transaction</text>
<text x="179.2" y="434.5" font-size="6.6" fill="#fff" text-anchor="start" textLength="30.01" lengthAdjust="spacingAndGlyphs" font-weight="bold" >Command</text>
<text x="229" y="434.5" font-size="6.6" fill="#fff" text-anchor="start" textLength="80.26" lengthAdjust="spacingAndGlyphs" font-weight="bold" >DPConfigReq / I2C Address</text>
<text x="352.7" y="434.5" font-size="6.6" fill="#fff" text-anchor="start" textLength="13.30" lengthAdjust="spacingAndGlyphs" font-weight="bold" >Data</text>
<text x="80.3" y="442.7" font-size="6.6" fill="#fff" text-anchor="start"   xml:space="preserve">Unknown</text>
<text x="130.2" y="442.7" font-size="6.6" fill="#fff" text-anchor="start"   xml:space="preserve">Native</text>
<text x="179.2" y="442.7" font-size="6.6" fill="#fff" text-anchor="start"   xml:space="preserve">Write</text>
<text x="229" y="442.7" font-size="6.6" fill="#fff" text-anchor="start"   xml:space="preserve">TRAINING  PATTERN  SET</text>
<text x="352.7" y="442.7" font-size="6.6" fill="#fff" text-anchor="start"   xml:space="preserve">Request to Write 5 Byte(s) at Addr TRAINING  PATTERN  SET</text>
<rect x="933" y="379" width="16" height="105" fill="#1a1a1a" />
<rect x="934" y="380" width="14" height="15" fill="#4a4a4a" />
<path d="M936 392 L941 386 L946 392 Z" fill="#f0f0f0"/>
<rect x="934" y="396" width="14" height="73" fill="#2a2a2a" />
<rect x="934" y="456" width="14" height="6" fill="#505050" />
<rect x="934" y="469" width="14" height="14" fill="#4a4a4a" />
<path d="M936 473 L946 473 L941 479 Z" fill="#f0f0f0"/>
<rect x="1" y="485" width="48" height="8" fill="#ffff00" />
<rect x="1" y="493" width="48" height="32" fill="#3c3c3c" />
<text x="2.5" y="491.8" font-size="6.8" fill="#000" text-anchor="start"   >C1</text>
<rect x="36.5" y="486" width="11.5" height="6" fill="#3a3a46" stroke="#777" stroke-width="0.5"/>
<text x="42.3" y="491" font-size="5" fill="#e8e8e8" text-anchor="middle"   >D50</text>
<text x="47.5" y="499.5" font-size="6.8" fill="#f0f0f0" text-anchor="end"   >200 mV/</text>
<text x="47.5" y="507" font-size="6.8" fill="#f0f0f0" text-anchor="end"   >0.0 mV</text>
<text x="47.5" y="523.5" font-size="6.8" fill="#f0f0f0" text-anchor="end"   >-38.0 mV</text>
<path d="M5 517.5 L5 524 M3.2 521 L6.8 521 M3.6 519.2 L5 517.3 L6.4 519.2" stroke="#e8e8e8" stroke-width="0.8" fill="none"/>
<circle cx="9.5" cy="500" r="6.5" fill="#454545"/>
<text x="9.5" y="498.5" font-size="4" fill="#999" text-anchor="middle"   >16</text>
<text x="9.5" y="503.5" font-size="4" fill="#999" text-anchor="middle"   >GHz</text>
<rect x="50" y="485" width="48.5" height="8" fill="#ff0090" />
<rect x="50" y="493" width="48.5" height="32" fill="#3c3c3c" />
<text x="51.5" y="491.8" font-size="6.8" fill="#000" text-anchor="start"   >C2</text>
<rect x="86.0" y="486" width="11.5" height="6" fill="#3a3a46" stroke="#777" stroke-width="0.5"/>
<text x="91.8" y="491" font-size="5" fill="#e8e8e8" text-anchor="middle"   >D50</text>
<text x="97.0" y="499.5" font-size="6.8" fill="#f0f0f0" text-anchor="end"   >200 mV/</text>
<text x="97.0" y="507" font-size="6.8" fill="#f0f0f0" text-anchor="end"   >0.0 mV</text>
<text x="97.0" y="523.5" font-size="6.8" fill="#f0f0f0" text-anchor="end"   >42.5 mV</text>
<path d="M54 517.5 L54 524 M52.2 521 L55.8 521 M52.6 519.2 L54 517.3 L55.4 519.2" stroke="#e8e8e8" stroke-width="0.8" fill="none"/>
<circle cx="58.5" cy="500" r="6.5" fill="#454545"/>
<text x="58.5" y="498.5" font-size="4" fill="#999" text-anchor="middle"   >16</text>
<text x="58.5" y="503.5" font-size="4" fill="#999" text-anchor="middle"   >GHz</text>
<rect x="99.3" y="485" width="48.7" height="8" fill="#00d800" />
<rect x="99.3" y="493" width="48.7" height="32" fill="#3c3c3c" />
<text x="100.8" y="491.8" font-size="6.8" fill="#000" text-anchor="start"   >C4</text>
<rect x="135.5" y="486" width="11.5" height="6" fill="#3a3a46" stroke="#777" stroke-width="0.5"/>
<text x="141.3" y="491" font-size="5" fill="#e8e8e8" text-anchor="middle"   >DC1</text>
<text x="146.5" y="499.5" font-size="6.8" fill="#f0f0f0" text-anchor="end"   >100 mV/</text>
<text x="146.5" y="507" font-size="6.8" fill="#f0f0f0" text-anchor="end"   >1.0970 V</text>
<text x="146.5" y="523.5" font-size="6.8" fill="#f0f0f0" text-anchor="end"   >-1.4566 V</text>
<path d="M103.3 517.5 L103.3 524 M101.5 521 L105.1 521 M101.89999999999999 519.2 L103.3 517.3 L104.7 519.2" stroke="#e8e8e8" stroke-width="0.8" fill="none"/>
<circle cx="107.8" cy="500" r="6.5" fill="#454545"/>
<text x="107.8" y="498.5" font-size="4" fill="#999" text-anchor="middle"   >500</text>
<text x="107.8" y="503.5" font-size="4" fill="#999" text-anchor="middle"   >MHz</text>
<rect x="149" y="485" width="48.5" height="8" fill="#ffff00" />
<rect x="149" y="493" width="48.5" height="32" fill="#3c3c3c" />
<text x="150.5" y="491.8" font-size="6.8" fill="#000" text-anchor="start"   >Z1</text>
<text x="196.5" y="491.8" font-size="6.8" fill="#000" text-anchor="end"   >zoom(C1)</text>
<text x="196.0" y="499.5" font-size="6.8" fill="#f0f0f0" text-anchor="end"   >112 mV/</text>
<text x="196.0" y="507" font-size="6.8" fill="#f0f0f0" text-anchor="end"   >5.00 ms/</text>
<text x="196.0" y="523.5" font-size="6.8" fill="#f0f0f0" text-anchor="end"   >-38.0 mV</text>
<path d="M153 517.5 L153 524 M151.2 521 L154.8 521 M151.6 519.2 L153 517.3 L154.4 519.2" stroke="#e8e8e8" stroke-width="0.8" fill="none"/>
<rect x="198.6" y="485" width="48.6" height="8" fill="#ff0090" />
<rect x="198.6" y="493" width="48.6" height="32" fill="#3c3c3c" />
<text x="200.1" y="491.8" font-size="6.8" fill="#000" text-anchor="start"   >Z2</text>
<text x="246.2" y="491.8" font-size="6.8" fill="#000" text-anchor="end"   >zoom(C4)</text>
<text x="245.7" y="499.5" font-size="6.8" fill="#f0f0f0" text-anchor="end"   >500 mV/</text>
<text x="245.7" y="507" font-size="6.8" fill="#f0f0f0" text-anchor="end"   >5.00 ms/</text>
<text x="245.7" y="523.5" font-size="6.8" fill="#f0f0f0" text-anchor="end"   >956.5 mV</text>
<path d="M202.6 517.5 L202.6 524 M200.79999999999998 521 L204.4 521 M201.2 519.2 L202.6 517.3 L204.0 519.2" stroke="#e8e8e8" stroke-width="0.8" fill="none"/>
<rect x="248.2" y="485" width="49" height="8" fill="#00f0f0" />
<rect x="248.2" y="493" width="49" height="32" fill="#2a4866" />
<rect x="248.7" y="485.5" width="48" height="39" fill="none" stroke="#2a7ad0" stroke-width="1"/>
<text x="249.7" y="491.8" font-size="6.8" fill="#000" text-anchor="start"   >Z3</text>
<text x="296.2" y="491.8" font-size="6.8" fill="#000" text-anchor="end"   >zoom(Z2)</text>
<text x="295.7" y="499.5" font-size="6.8" fill="#f0f0f0" text-anchor="end"   >200 mV/</text>
<text x="295.7" y="507" font-size="6.8" fill="#f0f0f0" text-anchor="end"   >20.5 µs/</text>
<text x="295.7" y="523.5" font-size="6.8" fill="#f0f0f0" text-anchor="end"   >956.5 mV</text>
<path d="M252.2 517.5 L252.2 524 M250.39999999999998 521 L254.0 521 M250.79999999999998 519.2 L252.2 517.3 L253.6 519.2" stroke="#e8e8e8" stroke-width="0.8" fill="none"/>
<rect x="298.5" y="485.5" width="47.5" height="39" fill="#000" stroke="#9a9a9a" stroke-width="0.8" stroke-dasharray="1.5,1.5"/>
<path d="M318 505 L325 505 M321.5 501.5 L321.5 508.5" stroke="#f0f0f0" stroke-width="1.2"/>
<rect x="842.6" y="485" width="55.4" height="8" fill="#ffffff" />
<rect x="842.6" y="493" width="55.4" height="16" fill="#3e3e3e" />
<text x="844" y="491.8" font-size="6.8" fill="#000" text-anchor="start"   >Tbase</text>
<text x="897" y="491.8" font-size="6.8" fill="#000" text-anchor="end"   >-400 ms</text>
<text x="897" y="499.8" font-size="6.8" fill="#f0f0f0" text-anchor="end"   >100 ms/div</text>
<text x="844" y="507" font-size="6.8" fill="#f0f0f0" text-anchor="start"   >10 MS</text>
<text x="897" y="507" font-size="6.8" fill="#f0f0f0" text-anchor="end"   >10 MS/s</text>
<rect x="899.8" y="485" width="48" height="8" fill="#ffffff" />
<rect x="899.8" y="493" width="48" height="16" fill="#3e3e3e" />
<text x="901" y="491.8" font-size="6.8" fill="#000" text-anchor="start"   >Trigger</text>
<rect x="939" y="486" width="8" height="6" fill="#2a2a2a" />
<text x="943" y="491" font-size="4.5" fill="#fff" text-anchor="middle"   >DC</text>
<text x="901" y="499.8" font-size="6.8" fill="#f0f0f0" text-anchor="start"   >Stop</text>
<text x="947" y="499.8" font-size="6.8" fill="#f0f0f0" text-anchor="end"   >-993 mV</text>
<text x="901" y="507" font-size="6.8" fill="#f0f0f0" text-anchor="start"   >DP-AUX</text>
<text x="845" y="515" font-size="6.8" fill="#f0f0f0" text-anchor="start"   >X1=</text>
<text x="898" y="515" font-size="6.8" fill="#f0f0f0" text-anchor="end"   >551.1509 ms</text>
<rect x="0" y="526" width="950" height="9" fill="#262626" />
<text x="2" y="533.6" font-size="7" fill="#f0f0f0" font-weight="bold" textLength="95" lengthAdjust="spacingAndGlyphs">TELEDYNE <tspan font-weight="normal" fill="#d8d8d8">LECROY</tspan><tspan font-weight="normal" fill="#aaa"> | </tspan><tspan fill="#30c030">HD</tspan><tspan font-weight="normal" fill="#e0e0e0"> 12 bits</tspan></text>
<rect x="434.5" y="530.3" width="79.5" height="1.8" fill="#e8e8e8" rx="0.9"/>
<text x="942" y="533.6" font-size="6.8" fill="#e8e8e8" text-anchor="end" textLength="65.00" lengthAdjust="spacingAndGlyphs"  >11/23/2024 8:39:41 AM</text>
</svg>
</body></html>
